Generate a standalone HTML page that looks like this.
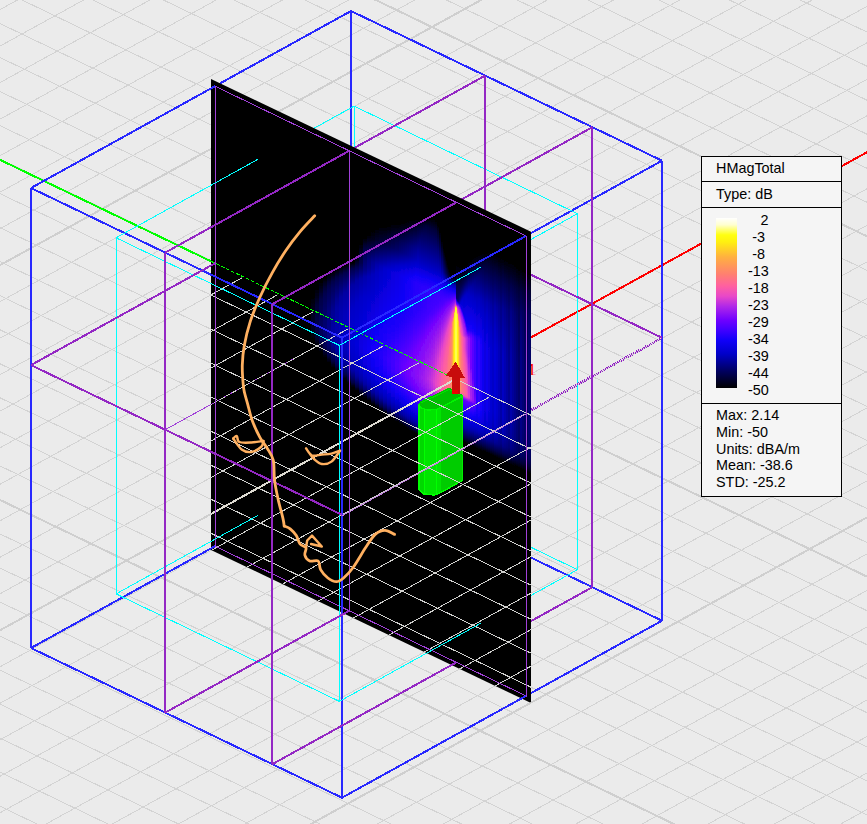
<!DOCTYPE html>
<html><head><meta charset="utf-8"><title>HMagTotal field plot</title>
<style>
html,body{margin:0;padding:0;background:#ebebeb;}
body{width:867px;height:824px;overflow:hidden;font-family:"Liberation Sans",sans-serif;}
svg{display:block}
.bl{stroke:#2828ff;stroke-width:2}
.cy{stroke:#00ffff;stroke-width:1}
.pu{stroke:#9428c4;stroke-width:2}
.put{stroke:#a040d8;stroke-width:1}
.put3{stroke:#a040d8;stroke-width:1;stroke-dasharray:2 5}
.put2{stroke:#c080e0;stroke-width:1;transform:translate(0,1px)}
.pud{stroke:#9420c8;stroke-width:2.6;stroke-dasharray:1 1}
.lg{font-family:"Liberation Sans",sans-serif;font-size:14.4px;fill:#000}
</style></head><body>
<svg width="867" height="824" viewBox="0 0 867 824">
<defs>
<clipPath id="cpOuter"><polygon points="211,79 531,231.8 531,703 211,550"/></clipPath>
<clipPath id="cpGrid"><polygon points="211,262.9 531,416.8 531,703 211,550"/></clipPath>
<clipPath id="cpOne"><rect x="531" y="355" width="20" height="20"/></clipPath>
<linearGradient id="cbar" x1="0" y1="0" x2="0" y2="1">
<stop offset="0" stop-color="#ffffff"/>
<stop offset="0.04" stop-color="#ffffd0"/>
<stop offset="0.10" stop-color="#ffff10"/>
<stop offset="0.14" stop-color="#fff010"/>
<stop offset="0.23" stop-color="#ffb040"/>
<stop offset="0.33" stop-color="#ff8070"/>
<stop offset="0.40" stop-color="#ff60a0"/>
<stop offset="0.46" stop-color="#e848c8"/>
<stop offset="0.52" stop-color="#b028e8"/>
<stop offset="0.60" stop-color="#7000ff"/>
<stop offset="0.66" stop-color="#4000ff"/>
<stop offset="0.72" stop-color="#1000f8"/>
<stop offset="0.80" stop-color="#0000c8"/>
<stop offset="0.90" stop-color="#000060"/>
<stop offset="1" stop-color="#000000"/>
</linearGradient>
</defs>
<rect width="867" height="824" fill="#ebebeb"/>
<g shape-rendering="crispEdges">

<path d="M0 -418.9 L867 -1.9 M0 -384.9 L867 32.1 M0 -350.9 L867 66.2 M0 -316.8 L867 100.2 M0 -282.8 L867 134.2 M0 -248.8 L867 168.3 M0 -214.7 L867 202.3 M0 -146.7 L867 270.4 M0 -112.6 L867 304.4 M0 -78.6 L867 338.4 M0 -44.6 L867 372.4 M0 -10.6 L867 406.5 M0 23.5 L867 440.5 M0 57.5 L867 474.5 M0 91.5 L867 508.6 M0 125.6 L867 542.6 M0 193.6 L867 610.7 M0 227.7 L867 644.7 M0 261.7 L867 678.7 M0 295.7 L867 712.7 M0 329.8 L867 746.8 M0 363.8 L867 780.8 M0 397.8 L867 814.8 M0 431.8 L867 848.9 M0 465.9 L867 882.9 M0 533.9 L867 951 M0 568 L867 985 M0 602 L867 1019 M0 636 L867 1053 M0 670.1 L867 1087.1 M0 704.1 L867 1121.1 M0 738.1 L867 1155.1 M0 772.1 L867 1189.2 M0 806.2 L867 1223.2 M0 9.6 L867 -468.3 M0 46.1 L867 -431.8 M0 82.6 L867 -395.3 M0 119.2 L867 -358.8 M0 155.7 L867 -322.3 M0 192.2 L867 -285.8 M0 228.7 L867 -249.3 M0 301.7 L867 -176.3 M0 338.2 L867 -139.8 M0 374.7 L867 -103.2 M0 411.2 L867 -66.7 M0 447.8 L867 -30.2 M0 484.3 L867 6.3 M0 520.8 L867 42.8 M0 557.3 L867 79.3 M0 593.8 L867 115.8 M0 666.8 L867 188.8 M0 703.3 L867 225.3 M0 739.8 L867 261.9 M0 776.3 L867 298.4 M0 812.8 L867 334.9 M0 849.4 L867 371.4 M0 885.9 L867 407.9 M0 922.4 L867 444.4 M0 958.9 L867 480.9 M0 1031.9 L867 553.9 M0 1068.4 L867 590.4 M0 1104.9 L867 627 M0 1141.4 L867 663.5 M0 1177.9 L867 700 M0 1214.5 L867 736.5 M0 1251 L867 773 M0 1287.5 L867 809.5" stroke="#d3d3d3" stroke-width="1" fill="none"/>
<path d="M0 -180.7 L867 236.3 M0 159.6 L867 576.6 M0 499.9 L867 916.9 M0 265.2 L867 -212.8 M0 630.3 L867 152.3 M0 995.4 L867 517.4" stroke="#cfcfcf" stroke-width="2" fill="none"/>
<line x1="0" y1="159.8" x2="211" y2="261.3" stroke="#00ff00" stroke-width="2"/>
<line x1="456.3" y1="378.6" x2="867" y2="152.2" stroke="#ff0000" stroke-width="2"/>
<g fill="none">
<line x1="351" y1="11" x2="215" y2="86.2" class="bl"/>
<line x1="662" y1="160.7" x2="526" y2="235.9" class="bl"/>
<line x1="351" y1="11" x2="662" y2="160.7" class="bl"/>
<line x1="351" y1="471" x2="215" y2="546.2" class="bl"/>
<line x1="662" y1="620.7" x2="526" y2="695.9" class="bl"/>
<line x1="351" y1="471" x2="662" y2="620.7" class="bl"/>
<line x1="351" y1="11" x2="351" y2="471" class="bl"/>
<line x1="662" y1="160.7" x2="662" y2="620.7" class="bl"/>
<line x1="354.1" y1="106.1" x2="258.1" y2="159.2" class="cy"/>
<line x1="577.5" y1="213.7" x2="481.5" y2="266.8" class="cy"/>
<line x1="354.1" y1="106.1" x2="577.5" y2="213.7" class="cy"/>
<line x1="354.1" y1="462.2" x2="258.1" y2="515.3" class="cy"/>
<line x1="577.5" y1="569.7" x2="481.5" y2="622.8" class="cy"/>
<line x1="354.1" y1="462.2" x2="577.5" y2="569.7" class="cy"/>
<line x1="354.1" y1="106.1" x2="354.1" y2="462.2" class="cy"/>
<line x1="577.5" y1="213.7" x2="577.5" y2="569.7" class="cy"/>
<line x1="485.2" y1="75.6" x2="349.2" y2="150.8" class="pu"/>
<line x1="485.2" y1="75.6" x2="485.2" y2="535.6" class="pu"/>
<line x1="485.2" y1="535.6" x2="349.2" y2="610.8" class="pu"/>
<line x1="592.3" y1="127.2" x2="456.3" y2="202.4" class="pu"/>
<line x1="592.3" y1="127.2" x2="592.3" y2="587.2" class="pu"/>
<line x1="592.3" y1="587.2" x2="456.3" y2="662.4" class="pu"/>
<line x1="351" y1="188.1" x2="215" y2="263.3" class="pu"/>
<line x1="351" y1="188.1" x2="662" y2="337.8" class="pu"/>
<line x1="662" y1="337.8" x2="526" y2="413" class="pud"/>
</g>
</g>
<text x="527.2" y="376.3" font-size="16.5" fill="#ff0000" font-family="Liberation Sans, sans-serif" clip-path="url(#cpOne)">1</text>
<polygon points="211,79 531,231.8 531,703 211,550" fill="#000"/>
<g clip-path="url(#cpOuter)">
<defs><linearGradient id="f0" x1="0" y1="0" x2="0" y2="1"><stop offset="0.000" stop-color="#000001"/><stop offset="1.000" stop-color="#000000"/></linearGradient><linearGradient id="f1" x1="0" y1="0" x2="0" y2="1"><stop offset="0.000" stop-color="#000000"/><stop offset="0.273" stop-color="#00001b"/><stop offset="0.591" stop-color="#000027"/><stop offset="0.773" stop-color="#00001f"/><stop offset="1.000" stop-color="#000000"/></linearGradient><linearGradient id="f2" x1="0" y1="0" x2="0" y2="1"><stop offset="0.000" stop-color="#000000"/><stop offset="0.310" stop-color="#000038"/><stop offset="0.621" stop-color="#00004a"/><stop offset="0.793" stop-color="#00003d"/><stop offset="0.897" stop-color="#000025"/><stop offset="1.000" stop-color="#000001"/></linearGradient><linearGradient id="f3" x1="0" y1="0" x2="0" y2="1"><stop offset="0.000" stop-color="#000000"/><stop offset="0.250" stop-color="#000048"/><stop offset="0.417" stop-color="#000057"/><stop offset="0.611" stop-color="#00005c"/><stop offset="0.722" stop-color="#000058"/><stop offset="0.833" stop-color="#000048"/><stop offset="0.972" stop-color="#000004"/><stop offset="1.000" stop-color="#000000"/></linearGradient><linearGradient id="f4" x1="0" y1="0" x2="0" y2="1"><stop offset="0.000" stop-color="#000000"/><stop offset="0.125" stop-color="#000036"/><stop offset="0.200" stop-color="#00004d"/><stop offset="0.425" stop-color="#000068"/><stop offset="0.625" stop-color="#000070"/><stop offset="0.750" stop-color="#000068"/><stop offset="0.875" stop-color="#00004f"/><stop offset="0.925" stop-color="#000036"/><stop offset="1.000" stop-color="#000000"/></linearGradient><linearGradient id="f5" x1="0" y1="0" x2="0" y2="1"><stop offset="0.000" stop-color="#000000"/><stop offset="0.133" stop-color="#000047"/><stop offset="0.178" stop-color="#000053"/><stop offset="0.422" stop-color="#00007c"/><stop offset="0.622" stop-color="#000089"/><stop offset="0.733" stop-color="#00007f"/><stop offset="0.889" stop-color="#000051"/><stop offset="0.911" stop-color="#000047"/><stop offset="0.978" stop-color="#00000d"/><stop offset="1.000" stop-color="#000000"/></linearGradient><linearGradient id="f6" x1="0" y1="0" x2="0" y2="1"><stop offset="0.000" stop-color="#000000"/><stop offset="0.104" stop-color="#000049"/><stop offset="0.167" stop-color="#00005b"/><stop offset="0.417" stop-color="#000093"/><stop offset="0.625" stop-color="#0000a3"/><stop offset="0.688" stop-color="#0000a0"/><stop offset="0.750" stop-color="#000094"/><stop offset="0.896" stop-color="#000059"/><stop offset="0.938" stop-color="#000042"/><stop offset="1.000" stop-color="#000000"/></linearGradient><linearGradient id="f7" x1="0" y1="0" x2="0" y2="1"><stop offset="0.000" stop-color="#000001"/><stop offset="0.077" stop-color="#000045"/><stop offset="0.096" stop-color="#00004f"/><stop offset="0.288" stop-color="#000090"/><stop offset="0.365" stop-color="#0000a2"/><stop offset="0.615" stop-color="#0000ae"/><stop offset="0.731" stop-color="#0000a7"/><stop offset="0.788" stop-color="#000096"/><stop offset="0.923" stop-color="#00004b"/><stop offset="0.981" stop-color="#000005"/><stop offset="1.000" stop-color="#000000"/></linearGradient><linearGradient id="f8" x1="0" y1="0" x2="0" y2="1"><stop offset="0.000" stop-color="#000000"/><stop offset="0.073" stop-color="#00004b"/><stop offset="0.273" stop-color="#00009f"/><stop offset="0.418" stop-color="#0000b1"/><stop offset="0.618" stop-color="#0000b9"/><stop offset="0.709" stop-color="#0000b4"/><stop offset="0.800" stop-color="#0000a4"/><stop offset="0.927" stop-color="#000050"/><stop offset="0.945" stop-color="#00003d"/><stop offset="0.982" stop-color="#000009"/><stop offset="1.000" stop-color="#000000"/></linearGradient><linearGradient id="f9" x1="0" y1="0" x2="0" y2="1"><stop offset="0.000" stop-color="#000000"/><stop offset="0.069" stop-color="#00004d"/><stop offset="0.241" stop-color="#0000a3"/><stop offset="0.431" stop-color="#0000bb"/><stop offset="0.621" stop-color="#0000c4"/><stop offset="0.724" stop-color="#0000bd"/><stop offset="0.828" stop-color="#0000a4"/><stop offset="0.931" stop-color="#000053"/><stop offset="0.948" stop-color="#000042"/><stop offset="0.983" stop-color="#00000a"/><stop offset="1.000" stop-color="#000000"/></linearGradient><linearGradient id="f10" x1="0" y1="0" x2="0" y2="1"><stop offset="0.000" stop-color="#000000"/><stop offset="0.016" stop-color="#00000c"/><stop offset="0.066" stop-color="#00004d"/><stop offset="0.197" stop-color="#00009f"/><stop offset="0.410" stop-color="#0000c3"/><stop offset="0.639" stop-color="#0200cd"/><stop offset="0.738" stop-color="#0000c5"/><stop offset="0.852" stop-color="#0000a2"/><stop offset="0.951" stop-color="#000044"/><stop offset="0.984" stop-color="#000009"/><stop offset="1.000" stop-color="#000000"/></linearGradient><linearGradient id="f11" x1="0" y1="0" x2="0" y2="1"><stop offset="0.000" stop-color="#000000"/><stop offset="0.016" stop-color="#000005"/><stop offset="0.062" stop-color="#00004c"/><stop offset="0.188" stop-color="#0000a4"/><stop offset="0.375" stop-color="#0000c7"/><stop offset="0.641" stop-color="#0400d4"/><stop offset="0.766" stop-color="#0000c8"/><stop offset="0.859" stop-color="#0000a6"/><stop offset="0.953" stop-color="#000044"/><stop offset="0.984" stop-color="#000005"/><stop offset="1.000" stop-color="#000000"/></linearGradient><linearGradient id="f12" x1="0" y1="0" x2="0" y2="1"><stop offset="0.000" stop-color="#000000"/><stop offset="0.058" stop-color="#000019"/><stop offset="0.101" stop-color="#00004d"/><stop offset="0.203" stop-color="#0000a3"/><stop offset="0.362" stop-color="#0000c8"/><stop offset="0.667" stop-color="#0600db"/><stop offset="0.812" stop-color="#0000c9"/><stop offset="0.884" stop-color="#0000a8"/><stop offset="0.899" stop-color="#00009e"/><stop offset="0.971" stop-color="#000041"/><stop offset="1.000" stop-color="#000000"/></linearGradient><linearGradient id="f13" x1="0" y1="0" x2="0" y2="1"><stop offset="0.000" stop-color="#000000"/><stop offset="0.013" stop-color="#000003"/><stop offset="0.092" stop-color="#00003a"/><stop offset="0.132" stop-color="#000049"/><stop offset="0.237" stop-color="#0000a7"/><stop offset="0.250" stop-color="#0000ab"/><stop offset="0.368" stop-color="#0000c9"/><stop offset="0.684" stop-color="#0900e3"/><stop offset="0.816" stop-color="#0300d0"/><stop offset="0.895" stop-color="#0000aa"/><stop offset="0.908" stop-color="#0000a0"/><stop offset="0.961" stop-color="#000053"/><stop offset="1.000" stop-color="#000000"/></linearGradient><linearGradient id="f14" x1="0" y1="0" x2="0" y2="1"><stop offset="0.000" stop-color="#000000"/><stop offset="0.012" stop-color="#000003"/><stop offset="0.049" stop-color="#00002c"/><stop offset="0.086" stop-color="#000049"/><stop offset="0.210" stop-color="#00008b"/><stop offset="0.247" stop-color="#0000ad"/><stop offset="0.370" stop-color="#0100cc"/><stop offset="0.691" stop-color="#0c00eb"/><stop offset="0.753" stop-color="#0a00e5"/><stop offset="0.827" stop-color="#0400d3"/><stop offset="0.864" stop-color="#0000c4"/><stop offset="0.901" stop-color="#0000ab"/><stop offset="0.914" stop-color="#0000a1"/><stop offset="0.963" stop-color="#000050"/><stop offset="0.988" stop-color="#00000f"/><stop offset="1.000" stop-color="#000000"/></linearGradient><linearGradient id="f15" x1="0" y1="0" x2="0" y2="1"><stop offset="0.000" stop-color="#000000"/><stop offset="0.107" stop-color="#00005c"/><stop offset="0.155" stop-color="#00007e"/><stop offset="0.202" stop-color="#000093"/><stop offset="0.250" stop-color="#0000b7"/><stop offset="0.393" stop-color="#0400d3"/><stop offset="0.690" stop-color="#0f00f4"/><stop offset="0.786" stop-color="#0a00e5"/><stop offset="0.857" stop-color="#0100cc"/><stop offset="0.893" stop-color="#0000b4"/><stop offset="0.917" stop-color="#00009f"/><stop offset="0.940" stop-color="#00006f"/><stop offset="0.964" stop-color="#00004b"/><stop offset="0.988" stop-color="#000003"/><stop offset="1.000" stop-color="#000000"/></linearGradient><linearGradient id="f16" x1="0" y1="0" x2="0" y2="1"><stop offset="0.000" stop-color="#000000"/><stop offset="0.046" stop-color="#000019"/><stop offset="0.184" stop-color="#000095"/><stop offset="0.218" stop-color="#0000a3"/><stop offset="0.253" stop-color="#0000bc"/><stop offset="0.575" stop-color="#0d00f0"/><stop offset="0.701" stop-color="#1400f9"/><stop offset="0.782" stop-color="#0e00f1"/><stop offset="0.862" stop-color="#0300d2"/><stop offset="0.897" stop-color="#0000bd"/><stop offset="0.931" stop-color="#00009b"/><stop offset="0.977" stop-color="#000040"/><stop offset="0.989" stop-color="#00001b"/><stop offset="1.000" stop-color="#000000"/></linearGradient><linearGradient id="f17" x1="0" y1="0" x2="0" y2="1"><stop offset="0.000" stop-color="#000000"/><stop offset="0.067" stop-color="#00002b"/><stop offset="0.200" stop-color="#0000a9"/><stop offset="0.244" stop-color="#0000c2"/><stop offset="0.578" stop-color="#1000f7"/><stop offset="0.700" stop-color="#1b00fa"/><stop offset="0.789" stop-color="#0f00f5"/><stop offset="0.889" stop-color="#0000c6"/><stop offset="0.922" stop-color="#0000a7"/><stop offset="0.933" stop-color="#000095"/><stop offset="0.967" stop-color="#000051"/><stop offset="0.989" stop-color="#00000a"/><stop offset="1.000" stop-color="#000000"/></linearGradient><linearGradient id="f18" x1="0" y1="0" x2="0" y2="1"><stop offset="0.000" stop-color="#000000"/><stop offset="0.087" stop-color="#000037"/><stop offset="0.217" stop-color="#0000b9"/><stop offset="0.250" stop-color="#0100ca"/><stop offset="0.543" stop-color="#1000f7"/><stop offset="0.707" stop-color="#2300fb"/><stop offset="0.804" stop-color="#1100f8"/><stop offset="0.902" stop-color="#0000c5"/><stop offset="0.935" stop-color="#0000a4"/><stop offset="0.978" stop-color="#000048"/><stop offset="1.000" stop-color="#000000"/></linearGradient><linearGradient id="f19" x1="0" y1="0" x2="0" y2="1"><stop offset="0.000" stop-color="#000000"/><stop offset="0.096" stop-color="#000044"/><stop offset="0.223" stop-color="#0000c9"/><stop offset="0.234" stop-color="#0200ce"/><stop offset="0.511" stop-color="#1000f8"/><stop offset="0.702" stop-color="#2e00fc"/><stop offset="0.745" stop-color="#2900fc"/><stop offset="0.819" stop-color="#1000f7"/><stop offset="0.904" stop-color="#0000c3"/><stop offset="0.936" stop-color="#00009e"/><stop offset="0.968" stop-color="#000054"/><stop offset="0.979" stop-color="#000035"/><stop offset="0.989" stop-color="#00000c"/><stop offset="1.000" stop-color="#000000"/></linearGradient><linearGradient id="f20" x1="0" y1="0" x2="0" y2="1"><stop offset="0.000" stop-color="#000001"/><stop offset="0.053" stop-color="#00002e"/><stop offset="0.105" stop-color="#000050"/><stop offset="0.200" stop-color="#0000b9"/><stop offset="0.232" stop-color="#0400d4"/><stop offset="0.484" stop-color="#1000f8"/><stop offset="0.705" stop-color="#3900fe"/><stop offset="0.758" stop-color="#3000fd"/><stop offset="0.832" stop-color="#1100f8"/><stop offset="0.905" stop-color="#0100ca"/><stop offset="0.937" stop-color="#0000a8"/><stop offset="0.947" stop-color="#000093"/><stop offset="0.979" stop-color="#000049"/><stop offset="0.989" stop-color="#00001f"/><stop offset="1.000" stop-color="#000000"/></linearGradient><linearGradient id="f21" x1="0" y1="0" x2="0" y2="1"><stop offset="0.000" stop-color="#000000"/><stop offset="0.071" stop-color="#00003b"/><stop offset="0.122" stop-color="#00005d"/><stop offset="0.204" stop-color="#0000bd"/><stop offset="0.245" stop-color="#0700dc"/><stop offset="0.459" stop-color="#1100f8"/><stop offset="0.551" stop-color="#1f00fa"/><stop offset="0.684" stop-color="#4100ff"/><stop offset="0.745" stop-color="#3e00ff"/><stop offset="0.837" stop-color="#1200f8"/><stop offset="0.908" stop-color="#0000c7"/><stop offset="0.939" stop-color="#0000a2"/><stop offset="0.969" stop-color="#000053"/><stop offset="0.990" stop-color="#000007"/><stop offset="1.000" stop-color="#000000"/></linearGradient><linearGradient id="f22" x1="0" y1="0" x2="0" y2="1"><stop offset="0.000" stop-color="#000000"/><stop offset="0.081" stop-color="#000048"/><stop offset="0.131" stop-color="#00006a"/><stop offset="0.212" stop-color="#0100cb"/><stop offset="0.253" stop-color="#0900e3"/><stop offset="0.424" stop-color="#1000f7"/><stop offset="0.525" stop-color="#2000fa"/><stop offset="0.646" stop-color="#4100ff"/><stop offset="0.707" stop-color="#4f00ff"/><stop offset="0.737" stop-color="#4c00ff"/><stop offset="0.778" stop-color="#3d00ff"/><stop offset="0.859" stop-color="#0e00f3"/><stop offset="0.909" stop-color="#0100cc"/><stop offset="0.939" stop-color="#0000a9"/><stop offset="0.980" stop-color="#000044"/><stop offset="0.990" stop-color="#000019"/><stop offset="1.000" stop-color="#000000"/></linearGradient><linearGradient id="f23" x1="0" y1="0" x2="0" y2="1"><stop offset="0.000" stop-color="#000000"/><stop offset="0.090" stop-color="#000053"/><stop offset="0.140" stop-color="#000076"/><stop offset="0.210" stop-color="#0100cb"/><stop offset="0.260" stop-color="#0b00e9"/><stop offset="0.410" stop-color="#1000f8"/><stop offset="0.500" stop-color="#1f00fa"/><stop offset="0.620" stop-color="#4100ff"/><stop offset="0.700" stop-color="#5700ff"/><stop offset="0.730" stop-color="#5600ff"/><stop offset="0.780" stop-color="#4500ff"/><stop offset="0.860" stop-color="#1000f8"/><stop offset="0.920" stop-color="#0000c7"/><stop offset="0.950" stop-color="#00009e"/><stop offset="0.980" stop-color="#00004e"/><stop offset="1.000" stop-color="#000000"/></linearGradient><linearGradient id="f24" x1="0" y1="0" x2="0" y2="1"><stop offset="0.000" stop-color="#000000"/><stop offset="0.099" stop-color="#00005a"/><stop offset="0.149" stop-color="#00007e"/><stop offset="0.208" stop-color="#0000c7"/><stop offset="0.238" stop-color="#0800df"/><stop offset="0.267" stop-color="#0c00ed"/><stop offset="0.396" stop-color="#1000f8"/><stop offset="0.495" stop-color="#2000fa"/><stop offset="0.604" stop-color="#4000ff"/><stop offset="0.703" stop-color="#5e00ff"/><stop offset="0.733" stop-color="#5d00ff"/><stop offset="0.792" stop-color="#4500ff"/><stop offset="0.871" stop-color="#0e00f3"/><stop offset="0.921" stop-color="#0100ca"/><stop offset="0.950" stop-color="#0000a3"/><stop offset="0.980" stop-color="#000052"/><stop offset="1.000" stop-color="#000001"/></linearGradient><linearGradient id="f25" x1="0" y1="0" x2="0" y2="1"><stop offset="0.000" stop-color="#000000"/><stop offset="0.010" stop-color="#000004"/><stop offset="0.107" stop-color="#000061"/><stop offset="0.155" stop-color="#000086"/><stop offset="0.214" stop-color="#0100cc"/><stop offset="0.272" stop-color="#0e00f1"/><stop offset="0.379" stop-color="#1000f8"/><stop offset="0.476" stop-color="#1f00fa"/><stop offset="0.592" stop-color="#4200ff"/><stop offset="0.699" stop-color="#6500ff"/><stop offset="0.728" stop-color="#6400ff"/><stop offset="0.786" stop-color="#4a00ff"/><stop offset="0.864" stop-color="#0f00f6"/><stop offset="0.913" stop-color="#0100cc"/><stop offset="0.942" stop-color="#0000a6"/><stop offset="0.971" stop-color="#000056"/><stop offset="0.981" stop-color="#000035"/><stop offset="0.990" stop-color="#000008"/><stop offset="1.000" stop-color="#000000"/></linearGradient><linearGradient id="f26" x1="0" y1="0" x2="0" y2="1"><stop offset="0.000" stop-color="#000001"/><stop offset="0.107" stop-color="#000069"/><stop offset="0.155" stop-color="#00008d"/><stop offset="0.204" stop-color="#0000c9"/><stop offset="0.233" stop-color="#0900e2"/><stop offset="0.272" stop-color="#0f00f5"/><stop offset="0.466" stop-color="#2100fa"/><stop offset="0.709" stop-color="#6e00ff"/><stop offset="0.748" stop-color="#6500ff"/><stop offset="0.806" stop-color="#4100ff"/><stop offset="0.864" stop-color="#1100f8"/><stop offset="0.922" stop-color="#0000c4"/><stop offset="0.942" stop-color="#0000a9"/><stop offset="0.951" stop-color="#000093"/><stop offset="0.981" stop-color="#00003d"/><stop offset="0.990" stop-color="#000010"/><stop offset="1.000" stop-color="#000000"/></linearGradient><linearGradient id="f27" x1="0" y1="0" x2="0" y2="1"><stop offset="0.000" stop-color="#000000"/><stop offset="0.115" stop-color="#000071"/><stop offset="0.163" stop-color="#000095"/><stop offset="0.202" stop-color="#0000c4"/><stop offset="0.260" stop-color="#0d00f0"/><stop offset="0.279" stop-color="#1100f8"/><stop offset="0.452" stop-color="#2100fa"/><stop offset="0.558" stop-color="#4100ff"/><stop offset="0.683" stop-color="#6e00ff"/><stop offset="0.731" stop-color="#7201fe"/><stop offset="0.779" stop-color="#5c00ff"/><stop offset="0.875" stop-color="#0e00f3"/><stop offset="0.923" stop-color="#0000c7"/><stop offset="0.942" stop-color="#0000ac"/><stop offset="0.952" stop-color="#000099"/><stop offset="0.981" stop-color="#000044"/><stop offset="0.990" stop-color="#000017"/><stop offset="1.000" stop-color="#000000"/></linearGradient><linearGradient id="f28" x1="0" y1="0" x2="0" y2="1"><stop offset="0.000" stop-color="#000000"/><stop offset="0.124" stop-color="#00007a"/><stop offset="0.171" stop-color="#00009d"/><stop offset="0.200" stop-color="#0000c0"/><stop offset="0.248" stop-color="#0b00ea"/><stop offset="0.267" stop-color="#0f00f4"/><stop offset="0.286" stop-color="#1600f9"/><stop offset="0.448" stop-color="#2200fb"/><stop offset="0.552" stop-color="#4300ff"/><stop offset="0.676" stop-color="#7302fe"/><stop offset="0.733" stop-color="#7805fc"/><stop offset="0.781" stop-color="#6200ff"/><stop offset="0.876" stop-color="#0f00f6"/><stop offset="0.924" stop-color="#0000c9"/><stop offset="0.952" stop-color="#00009f"/><stop offset="0.981" stop-color="#00004b"/><stop offset="0.990" stop-color="#00001e"/><stop offset="1.000" stop-color="#000000"/></linearGradient><linearGradient id="f29" x1="0" y1="0" x2="0" y2="1"><stop offset="0.000" stop-color="#000000"/><stop offset="0.009" stop-color="#000004"/><stop offset="0.132" stop-color="#000082"/><stop offset="0.179" stop-color="#0000a5"/><stop offset="0.208" stop-color="#0000c8"/><stop offset="0.274" stop-color="#1000f8"/><stop offset="0.292" stop-color="#1b00fa"/><stop offset="0.443" stop-color="#2400fb"/><stop offset="0.538" stop-color="#4200ff"/><stop offset="0.660" stop-color="#7402fe"/><stop offset="0.736" stop-color="#7d08fa"/><stop offset="0.783" stop-color="#6900ff"/><stop offset="0.877" stop-color="#1100f8"/><stop offset="0.925" stop-color="#0100cb"/><stop offset="0.953" stop-color="#0000a3"/><stop offset="0.981" stop-color="#00004e"/><stop offset="1.000" stop-color="#000000"/></linearGradient><linearGradient id="f30" x1="0" y1="0" x2="0" y2="1"><stop offset="0.000" stop-color="#000000"/><stop offset="0.038" stop-color="#00002d"/><stop offset="0.132" stop-color="#00008a"/><stop offset="0.179" stop-color="#0000ad"/><stop offset="0.198" stop-color="#0000c3"/><stop offset="0.264" stop-color="#1000f7"/><stop offset="0.292" stop-color="#2100fa"/><stop offset="0.453" stop-color="#2b00fc"/><stop offset="0.632" stop-color="#7201fe"/><stop offset="0.708" stop-color="#830cf8"/><stop offset="0.774" stop-color="#7604fd"/><stop offset="0.830" stop-color="#4300ff"/><stop offset="0.877" stop-color="#1300f8"/><stop offset="0.925" stop-color="#0200cd"/><stop offset="0.943" stop-color="#0000b4"/><stop offset="0.953" stop-color="#0000a6"/><stop offset="0.981" stop-color="#000052"/><stop offset="1.000" stop-color="#000000"/></linearGradient><linearGradient id="f31" x1="0" y1="0" x2="0" y2="1"><stop offset="0.000" stop-color="#000000"/><stop offset="0.130" stop-color="#000089"/><stop offset="0.185" stop-color="#0000b4"/><stop offset="0.204" stop-color="#0100ca"/><stop offset="0.259" stop-color="#1000f7"/><stop offset="0.296" stop-color="#2600fb"/><stop offset="0.426" stop-color="#2900fc"/><stop offset="0.509" stop-color="#4300ff"/><stop offset="0.611" stop-color="#7302fe"/><stop offset="0.694" stop-color="#870ef7"/><stop offset="0.731" stop-color="#870ef7"/><stop offset="0.787" stop-color="#6f00ff"/><stop offset="0.861" stop-color="#1d00fa"/><stop offset="0.880" stop-color="#0f00f5"/><stop offset="0.926" stop-color="#0000c4"/><stop offset="0.944" stop-color="#0000a8"/><stop offset="0.972" stop-color="#000055"/><stop offset="0.981" stop-color="#000031"/><stop offset="0.991" stop-color="#000002"/><stop offset="1.000" stop-color="#000000"/></linearGradient><linearGradient id="f32" x1="0" y1="0" x2="0" y2="1"><stop offset="0.000" stop-color="#000000"/><stop offset="0.009" stop-color="#000002"/><stop offset="0.046" stop-color="#000034"/><stop offset="0.147" stop-color="#00009a"/><stop offset="0.211" stop-color="#0100cc"/><stop offset="0.266" stop-color="#1000f8"/><stop offset="0.303" stop-color="#2700fb"/><stop offset="0.422" stop-color="#2b00fc"/><stop offset="0.495" stop-color="#4200ff"/><stop offset="0.596" stop-color="#7402fe"/><stop offset="0.725" stop-color="#8d12f4"/><stop offset="0.789" stop-color="#7503fd"/><stop offset="0.881" stop-color="#1000f7"/><stop offset="0.927" stop-color="#0000c7"/><stop offset="0.945" stop-color="#0000aa"/><stop offset="0.972" stop-color="#000058"/><stop offset="0.982" stop-color="#000037"/><stop offset="0.991" stop-color="#000008"/><stop offset="1.000" stop-color="#000000"/></linearGradient><linearGradient id="f33" x1="0" y1="0" x2="0" y2="1"><stop offset="0.000" stop-color="#000000"/><stop offset="0.037" stop-color="#000033"/><stop offset="0.101" stop-color="#000075"/><stop offset="0.202" stop-color="#0000c3"/><stop offset="0.266" stop-color="#1000f8"/><stop offset="0.303" stop-color="#2800fb"/><stop offset="0.413" stop-color="#2d00fc"/><stop offset="0.477" stop-color="#4000ff"/><stop offset="0.578" stop-color="#7403fd"/><stop offset="0.725" stop-color="#9316f2"/><stop offset="0.761" stop-color="#8910f6"/><stop offset="0.798" stop-color="#7201fe"/><stop offset="0.881" stop-color="#1100f8"/><stop offset="0.927" stop-color="#0000c9"/><stop offset="0.945" stop-color="#0000ac"/><stop offset="0.954" stop-color="#000098"/><stop offset="0.982" stop-color="#00003d"/><stop offset="0.991" stop-color="#00000d"/><stop offset="1.000" stop-color="#000000"/></linearGradient><linearGradient id="f34" x1="0" y1="0" x2="0" y2="1"><stop offset="0.000" stop-color="#000000"/><stop offset="0.009" stop-color="#000003"/><stop offset="0.027" stop-color="#000026"/><stop offset="0.073" stop-color="#000058"/><stop offset="0.209" stop-color="#0000c3"/><stop offset="0.273" stop-color="#1100f8"/><stop offset="0.309" stop-color="#2900fc"/><stop offset="0.409" stop-color="#2f00fd"/><stop offset="0.473" stop-color="#4300ff"/><stop offset="0.573" stop-color="#7805fc"/><stop offset="0.727" stop-color="#9a1bf0"/><stop offset="0.764" stop-color="#8e13f4"/><stop offset="0.800" stop-color="#7704fd"/><stop offset="0.882" stop-color="#1300f8"/><stop offset="0.927" stop-color="#0100ca"/><stop offset="0.955" stop-color="#00009c"/><stop offset="0.982" stop-color="#000042"/><stop offset="0.991" stop-color="#000013"/><stop offset="1.000" stop-color="#000000"/></linearGradient><linearGradient id="f35" x1="0" y1="0" x2="0" y2="1"><stop offset="0.000" stop-color="#000000"/><stop offset="0.027" stop-color="#00002f"/><stop offset="0.045" stop-color="#000044"/><stop offset="0.209" stop-color="#0000c3"/><stop offset="0.264" stop-color="#0f00f4"/><stop offset="0.309" stop-color="#2a00fc"/><stop offset="0.400" stop-color="#3200fd"/><stop offset="0.455" stop-color="#4100ff"/><stop offset="0.555" stop-color="#7805fc"/><stop offset="0.727" stop-color="#a21fed"/><stop offset="0.755" stop-color="#991af0"/><stop offset="0.809" stop-color="#7302fe"/><stop offset="0.882" stop-color="#1500f9"/><stop offset="0.927" stop-color="#0100cb"/><stop offset="0.955" stop-color="#0000a0"/><stop offset="0.982" stop-color="#000047"/><stop offset="0.991" stop-color="#000018"/><stop offset="1.000" stop-color="#000000"/></linearGradient><linearGradient id="f36" x1="0" y1="0" x2="0" y2="1"><stop offset="0.000" stop-color="#000000"/><stop offset="0.009" stop-color="#000004"/><stop offset="0.036" stop-color="#000039"/><stop offset="0.216" stop-color="#0000c3"/><stop offset="0.270" stop-color="#0f00f4"/><stop offset="0.315" stop-color="#2c00fc"/><stop offset="0.405" stop-color="#3500fd"/><stop offset="0.450" stop-color="#4400ff"/><stop offset="0.523" stop-color="#7100ff"/><stop offset="0.550" stop-color="#7c08fb"/><stop offset="0.676" stop-color="#a21fed"/><stop offset="0.730" stop-color="#aa24ea"/><stop offset="0.766" stop-color="#9b1bf0"/><stop offset="0.811" stop-color="#7805fc"/><stop offset="0.874" stop-color="#1f00fa"/><stop offset="0.892" stop-color="#0f00f5"/><stop offset="0.928" stop-color="#0200cd"/><stop offset="0.955" stop-color="#0000a3"/><stop offset="0.982" stop-color="#00004b"/><stop offset="0.991" stop-color="#00001c"/><stop offset="1.000" stop-color="#000000"/></linearGradient><linearGradient id="f37" x1="0" y1="0" x2="0" y2="1"><stop offset="0.000" stop-color="#000000"/><stop offset="0.036" stop-color="#000039"/><stop offset="0.216" stop-color="#0000c3"/><stop offset="0.270" stop-color="#0f00f5"/><stop offset="0.315" stop-color="#2d00fc"/><stop offset="0.432" stop-color="#4200ff"/><stop offset="0.505" stop-color="#7000ff"/><stop offset="0.532" stop-color="#7d08fa"/><stop offset="0.721" stop-color="#b42ae6"/><stop offset="0.766" stop-color="#a220ed"/><stop offset="0.811" stop-color="#7c07fb"/><stop offset="0.829" stop-color="#6400ff"/><stop offset="0.874" stop-color="#2200fb"/><stop offset="0.892" stop-color="#1000f7"/><stop offset="0.937" stop-color="#0000c3"/><stop offset="0.955" stop-color="#0000a5"/><stop offset="0.982" stop-color="#00004d"/><stop offset="0.991" stop-color="#000021"/><stop offset="1.000" stop-color="#000000"/></linearGradient><linearGradient id="f38" x1="0" y1="0" x2="0" y2="1"><stop offset="0.000" stop-color="#000000"/><stop offset="0.009" stop-color="#000004"/><stop offset="0.018" stop-color="#000019"/><stop offset="0.045" stop-color="#000039"/><stop offset="0.223" stop-color="#0000c3"/><stop offset="0.277" stop-color="#0f00f6"/><stop offset="0.321" stop-color="#2f00fd"/><stop offset="0.420" stop-color="#4100ff"/><stop offset="0.491" stop-color="#7000ff"/><stop offset="0.527" stop-color="#810bf9"/><stop offset="0.723" stop-color="#be30e0"/><stop offset="0.759" stop-color="#b128e8"/><stop offset="0.812" stop-color="#800af9"/><stop offset="0.830" stop-color="#6900ff"/><stop offset="0.875" stop-color="#2400fb"/><stop offset="0.893" stop-color="#1100f8"/><stop offset="0.938" stop-color="#0000c4"/><stop offset="0.955" stop-color="#0000a6"/><stop offset="0.982" stop-color="#00004f"/><stop offset="1.000" stop-color="#000000"/></linearGradient><linearGradient id="f39" x1="0" y1="0" x2="0" y2="1"><stop offset="0.000" stop-color="#000000"/><stop offset="0.045" stop-color="#000039"/><stop offset="0.223" stop-color="#0000c3"/><stop offset="0.277" stop-color="#1000f7"/><stop offset="0.321" stop-color="#3100fd"/><stop offset="0.402" stop-color="#4100ff"/><stop offset="0.429" stop-color="#4c00ff"/><stop offset="0.473" stop-color="#6f00ff"/><stop offset="0.509" stop-color="#820bf9"/><stop offset="0.723" stop-color="#cb37d9"/><stop offset="0.759" stop-color="#bb2ee2"/><stop offset="0.786" stop-color="#a11fed"/><stop offset="0.830" stop-color="#6e00ff"/><stop offset="0.875" stop-color="#2700fb"/><stop offset="0.893" stop-color="#1200f8"/><stop offset="0.938" stop-color="#0000c6"/><stop offset="0.955" stop-color="#0000a8"/><stop offset="0.982" stop-color="#000052"/><stop offset="1.000" stop-color="#000000"/></linearGradient><linearGradient id="f40" x1="0" y1="0" x2="0" y2="1"><stop offset="0.000" stop-color="#000000"/><stop offset="0.009" stop-color="#000003"/><stop offset="0.053" stop-color="#000039"/><stop offset="0.230" stop-color="#0000c3"/><stop offset="0.283" stop-color="#1000f7"/><stop offset="0.327" stop-color="#3300fd"/><stop offset="0.398" stop-color="#4300ff"/><stop offset="0.425" stop-color="#5000ff"/><stop offset="0.460" stop-color="#6e00ff"/><stop offset="0.496" stop-color="#830cf8"/><stop offset="0.726" stop-color="#db40d0"/><stop offset="0.752" stop-color="#cf3ad6"/><stop offset="0.779" stop-color="#b32ae6"/><stop offset="0.832" stop-color="#7201fe"/><stop offset="0.876" stop-color="#2900fc"/><stop offset="0.894" stop-color="#1300f8"/><stop offset="0.938" stop-color="#0000c8"/><stop offset="0.956" stop-color="#0000a9"/><stop offset="0.982" stop-color="#000053"/><stop offset="1.000" stop-color="#000000"/></linearGradient><linearGradient id="f41" x1="0" y1="0" x2="0" y2="1"><stop offset="0.000" stop-color="#000000"/><stop offset="0.045" stop-color="#000037"/><stop offset="0.223" stop-color="#0000c3"/><stop offset="0.277" stop-color="#1000f8"/><stop offset="0.321" stop-color="#3500fd"/><stop offset="0.375" stop-color="#4100ff"/><stop offset="0.411" stop-color="#5400ff"/><stop offset="0.438" stop-color="#6c00ff"/><stop offset="0.536" stop-color="#a11fed"/><stop offset="0.679" stop-color="#de42ce"/><stop offset="0.732" stop-color="#e848c7"/><stop offset="0.759" stop-color="#d53dd3"/><stop offset="0.786" stop-color="#b128e8"/><stop offset="0.830" stop-color="#7604fd"/><stop offset="0.893" stop-color="#1400f9"/><stop offset="0.938" stop-color="#0000c9"/><stop offset="0.955" stop-color="#0000aa"/><stop offset="0.982" stop-color="#000055"/><stop offset="1.000" stop-color="#000000"/></linearGradient><linearGradient id="f42" x1="0" y1="0" x2="0" y2="1"><stop offset="0.000" stop-color="#000000"/><stop offset="0.027" stop-color="#000025"/><stop offset="0.118" stop-color="#00007a"/><stop offset="0.209" stop-color="#0000c3"/><stop offset="0.264" stop-color="#1200f8"/><stop offset="0.309" stop-color="#3700fe"/><stop offset="0.355" stop-color="#4200ff"/><stop offset="0.382" stop-color="#5100ff"/><stop offset="0.418" stop-color="#7302fe"/><stop offset="0.618" stop-color="#da40d0"/><stop offset="0.655" stop-color="#e848c8"/><stop offset="0.727" stop-color="#ef50bb"/><stop offset="0.755" stop-color="#e546ca"/><stop offset="0.791" stop-color="#ab25ea"/><stop offset="0.836" stop-color="#6a00ff"/><stop offset="0.882" stop-color="#1f00fa"/><stop offset="0.900" stop-color="#0f00f4"/><stop offset="0.936" stop-color="#0000c9"/><stop offset="0.955" stop-color="#0000ac"/><stop offset="0.964" stop-color="#000094"/><stop offset="0.982" stop-color="#000057"/><stop offset="0.991" stop-color="#000032"/><stop offset="1.000" stop-color="#000001"/></linearGradient><linearGradient id="f43" x1="0" y1="0" x2="0" y2="1"><stop offset="0.000" stop-color="#000000"/><stop offset="0.009" stop-color="#000003"/><stop offset="0.138" stop-color="#00008f"/><stop offset="0.193" stop-color="#0000c2"/><stop offset="0.239" stop-color="#0e00f2"/><stop offset="0.284" stop-color="#3300fd"/><stop offset="0.321" stop-color="#4000ff"/><stop offset="0.358" stop-color="#5500ff"/><stop offset="0.385" stop-color="#7101ff"/><stop offset="0.587" stop-color="#e546ca"/><stop offset="0.716" stop-color="#f757af"/><stop offset="0.752" stop-color="#e848c7"/><stop offset="0.780" stop-color="#b32ae6"/><stop offset="0.826" stop-color="#6e00ff"/><stop offset="0.872" stop-color="#2100fa"/><stop offset="0.890" stop-color="#0f00f5"/><stop offset="0.927" stop-color="#0100ca"/><stop offset="0.945" stop-color="#0000ad"/><stop offset="0.954" stop-color="#000097"/><stop offset="0.972" stop-color="#000058"/><stop offset="0.982" stop-color="#000035"/><stop offset="0.991" stop-color="#000004"/><stop offset="1.000" stop-color="#000000"/></linearGradient><linearGradient id="f44" x1="0" y1="0" x2="0" y2="1"><stop offset="0.000" stop-color="#000000"/><stop offset="0.010" stop-color="#000003"/><stop offset="0.152" stop-color="#0000a3"/><stop offset="0.190" stop-color="#0700de"/><stop offset="0.210" stop-color="#0e00f1"/><stop offset="0.248" stop-color="#2f00fd"/><stop offset="0.286" stop-color="#4100ff"/><stop offset="0.314" stop-color="#5000ff"/><stop offset="0.343" stop-color="#6e00ff"/><stop offset="0.438" stop-color="#ae27e9"/><stop offset="0.533" stop-color="#e848c8"/><stop offset="0.629" stop-color="#f859ac"/><stop offset="0.705" stop-color="#fd5ea3"/><stop offset="0.733" stop-color="#f556b1"/><stop offset="0.752" stop-color="#e848c8"/><stop offset="0.781" stop-color="#a924ea"/><stop offset="0.819" stop-color="#7101ff"/><stop offset="0.867" stop-color="#2200fb"/><stop offset="0.886" stop-color="#0f00f6"/><stop offset="0.924" stop-color="#0100cb"/><stop offset="0.943" stop-color="#0000ad"/><stop offset="0.952" stop-color="#000099"/><stop offset="0.971" stop-color="#000059"/><stop offset="0.981" stop-color="#000038"/><stop offset="0.990" stop-color="#000006"/><stop offset="1.000" stop-color="#000000"/></linearGradient><linearGradient id="f45" x1="0" y1="0" x2="0" y2="1"><stop offset="0.000" stop-color="#000000"/><stop offset="0.010" stop-color="#000003"/><stop offset="0.127" stop-color="#00008b"/><stop offset="0.157" stop-color="#0000c8"/><stop offset="0.186" stop-color="#0d00ee"/><stop offset="0.196" stop-color="#1000f8"/><stop offset="0.216" stop-color="#2700fb"/><stop offset="0.255" stop-color="#4000ff"/><stop offset="0.284" stop-color="#5100ff"/><stop offset="0.314" stop-color="#7100ff"/><stop offset="0.402" stop-color="#af27e8"/><stop offset="0.490" stop-color="#e949c6"/><stop offset="0.588" stop-color="#fb5ba8"/><stop offset="0.676" stop-color="#ff639b"/><stop offset="0.706" stop-color="#ff619e"/><stop offset="0.725" stop-color="#fb5ca7"/><stop offset="0.745" stop-color="#ed4ebf"/><stop offset="0.755" stop-color="#dd42ce"/><stop offset="0.775" stop-color="#ae27e9"/><stop offset="0.794" stop-color="#8d12f5"/><stop offset="0.814" stop-color="#7302fe"/><stop offset="0.863" stop-color="#2300fb"/><stop offset="0.882" stop-color="#0f00f6"/><stop offset="0.922" stop-color="#0100cb"/><stop offset="0.951" stop-color="#00009a"/><stop offset="0.980" stop-color="#000039"/><stop offset="0.990" stop-color="#000008"/><stop offset="1.000" stop-color="#000000"/></linearGradient><linearGradient id="f46" x1="0" y1="0" x2="0" y2="1"><stop offset="0.000" stop-color="#000000"/><stop offset="0.010" stop-color="#000004"/><stop offset="0.110" stop-color="#000078"/><stop offset="0.150" stop-color="#0400d4"/><stop offset="0.170" stop-color="#0c00ec"/><stop offset="0.190" stop-color="#1b00fa"/><stop offset="0.240" stop-color="#4200ff"/><stop offset="0.270" stop-color="#5700ff"/><stop offset="0.290" stop-color="#6e00ff"/><stop offset="0.380" stop-color="#b329e7"/><stop offset="0.460" stop-color="#ea4ac5"/><stop offset="0.530" stop-color="#f859ac"/><stop offset="0.590" stop-color="#ff60a0"/><stop offset="0.680" stop-color="#ff6795"/><stop offset="0.710" stop-color="#ff639c"/><stop offset="0.730" stop-color="#f95aab"/><stop offset="0.750" stop-color="#e546ca"/><stop offset="0.770" stop-color="#b229e7"/><stop offset="0.790" stop-color="#8e13f4"/><stop offset="0.820" stop-color="#6200ff"/><stop offset="0.860" stop-color="#2400fb"/><stop offset="0.880" stop-color="#1000f7"/><stop offset="0.920" stop-color="#0100cb"/><stop offset="0.950" stop-color="#00009b"/><stop offset="0.980" stop-color="#00003a"/><stop offset="0.990" stop-color="#000009"/><stop offset="1.000" stop-color="#000000"/></linearGradient><linearGradient id="f47" x1="0" y1="0" x2="0" y2="1"><stop offset="0.000" stop-color="#000000"/><stop offset="0.010" stop-color="#000005"/><stop offset="0.092" stop-color="#000064"/><stop offset="0.112" stop-color="#000093"/><stop offset="0.133" stop-color="#0200cf"/><stop offset="0.153" stop-color="#0b00e9"/><stop offset="0.173" stop-color="#1a00f9"/><stop offset="0.224" stop-color="#4400ff"/><stop offset="0.265" stop-color="#6c00ff"/><stop offset="0.347" stop-color="#ae27e9"/><stop offset="0.418" stop-color="#e747c9"/><stop offset="0.500" stop-color="#fa5ba9"/><stop offset="0.582" stop-color="#ff649a"/><stop offset="0.673" stop-color="#ff6b90"/><stop offset="0.714" stop-color="#ff629d"/><stop offset="0.735" stop-color="#f555b2"/><stop offset="0.745" stop-color="#ea4ac5"/><stop offset="0.765" stop-color="#b52be5"/><stop offset="0.786" stop-color="#9014f4"/><stop offset="0.816" stop-color="#6300ff"/><stop offset="0.857" stop-color="#2400fb"/><stop offset="0.878" stop-color="#1000f7"/><stop offset="0.918" stop-color="#0100cc"/><stop offset="0.949" stop-color="#00009c"/><stop offset="0.980" stop-color="#00003b"/><stop offset="0.990" stop-color="#00000a"/><stop offset="1.000" stop-color="#000000"/></linearGradient><linearGradient id="f48" x1="0" y1="0" x2="0" y2="1"><stop offset="0.000" stop-color="#000000"/><stop offset="0.031" stop-color="#00001d"/><stop offset="0.073" stop-color="#000051"/><stop offset="0.094" stop-color="#000084"/><stop offset="0.115" stop-color="#0100cb"/><stop offset="0.135" stop-color="#0a00e6"/><stop offset="0.156" stop-color="#1900f9"/><stop offset="0.208" stop-color="#4600ff"/><stop offset="0.250" stop-color="#7604fd"/><stop offset="0.323" stop-color="#b229e7"/><stop offset="0.385" stop-color="#e748c8"/><stop offset="0.458" stop-color="#fa5ba9"/><stop offset="0.615" stop-color="#ff6c8e"/><stop offset="0.677" stop-color="#ff6e8b"/><stop offset="0.719" stop-color="#ff609f"/><stop offset="0.740" stop-color="#ed4dbf"/><stop offset="0.760" stop-color="#b82de3"/><stop offset="0.781" stop-color="#9114f3"/><stop offset="0.812" stop-color="#6400ff"/><stop offset="0.854" stop-color="#2500fb"/><stop offset="0.875" stop-color="#1000f7"/><stop offset="0.917" stop-color="#0100cc"/><stop offset="0.948" stop-color="#00009c"/><stop offset="0.979" stop-color="#00003c"/><stop offset="0.990" stop-color="#00000b"/><stop offset="1.000" stop-color="#000000"/></linearGradient><linearGradient id="f49" x1="0" y1="0" x2="0" y2="1"><stop offset="0.000" stop-color="#000000"/><stop offset="0.053" stop-color="#00003f"/><stop offset="0.064" stop-color="#000055"/><stop offset="0.074" stop-color="#000076"/><stop offset="0.096" stop-color="#0000c7"/><stop offset="0.106" stop-color="#0500d6"/><stop offset="0.138" stop-color="#1900f9"/><stop offset="0.181" stop-color="#4100ff"/><stop offset="0.223" stop-color="#7302fe"/><stop offset="0.287" stop-color="#ad26e9"/><stop offset="0.351" stop-color="#e848c8"/><stop offset="0.447" stop-color="#fe5fa1"/><stop offset="0.564" stop-color="#ff6f89"/><stop offset="0.670" stop-color="#ff7186"/><stop offset="0.713" stop-color="#ff649a"/><stop offset="0.734" stop-color="#f051ba"/><stop offset="0.745" stop-color="#db41cf"/><stop offset="0.755" stop-color="#bb2fe1"/><stop offset="0.777" stop-color="#9215f3"/><stop offset="0.809" stop-color="#6500ff"/><stop offset="0.851" stop-color="#2500fb"/><stop offset="0.872" stop-color="#1000f8"/><stop offset="0.915" stop-color="#0100cc"/><stop offset="0.947" stop-color="#00009d"/><stop offset="0.979" stop-color="#00003d"/><stop offset="0.989" stop-color="#00000b"/><stop offset="1.000" stop-color="#000000"/></linearGradient><linearGradient id="f50" x1="0" y1="0" x2="0" y2="1"><stop offset="0.000" stop-color="#000000"/><stop offset="0.011" stop-color="#000003"/><stop offset="0.043" stop-color="#00002e"/><stop offset="0.054" stop-color="#000046"/><stop offset="0.086" stop-color="#0000c2"/><stop offset="0.097" stop-color="#0400d4"/><stop offset="0.129" stop-color="#1900f9"/><stop offset="0.172" stop-color="#4300ff"/><stop offset="0.204" stop-color="#7000ff"/><stop offset="0.269" stop-color="#b028e8"/><stop offset="0.323" stop-color="#e848c8"/><stop offset="0.344" stop-color="#f050ba"/><stop offset="0.409" stop-color="#ff60a0"/><stop offset="0.473" stop-color="#ff6992"/><stop offset="0.484" stop-color="#ff7186"/><stop offset="0.516" stop-color="#ff7483"/><stop offset="0.667" stop-color="#ff7581"/><stop offset="0.699" stop-color="#ff6e8b"/><stop offset="0.720" stop-color="#ff60a1"/><stop offset="0.742" stop-color="#e144cc"/><stop offset="0.753" stop-color="#be30e0"/><stop offset="0.774" stop-color="#9316f2"/><stop offset="0.806" stop-color="#6600ff"/><stop offset="0.849" stop-color="#2600fb"/><stop offset="0.871" stop-color="#1000f8"/><stop offset="0.914" stop-color="#0100cc"/><stop offset="0.946" stop-color="#00009e"/><stop offset="0.978" stop-color="#00003d"/><stop offset="0.989" stop-color="#00000c"/><stop offset="1.000" stop-color="#000000"/></linearGradient><linearGradient id="f51" x1="0" y1="0" x2="0" y2="1"><stop offset="0.000" stop-color="#000000"/><stop offset="0.022" stop-color="#00001f"/><stop offset="0.033" stop-color="#000038"/><stop offset="0.066" stop-color="#0000be"/><stop offset="0.099" stop-color="#0e00f1"/><stop offset="0.110" stop-color="#1a00f9"/><stop offset="0.154" stop-color="#4800ff"/><stop offset="0.176" stop-color="#6a00ff"/><stop offset="0.242" stop-color="#b42ae6"/><stop offset="0.286" stop-color="#e848c8"/><stop offset="0.330" stop-color="#f859ac"/><stop offset="0.363" stop-color="#ff60a0"/><stop offset="0.407" stop-color="#ff6894"/><stop offset="0.418" stop-color="#ff767f"/><stop offset="0.527" stop-color="#ff787b"/><stop offset="0.670" stop-color="#ff777d"/><stop offset="0.692" stop-color="#ff7286"/><stop offset="0.714" stop-color="#ff639b"/><stop offset="0.736" stop-color="#e647c9"/><stop offset="0.747" stop-color="#c132de"/><stop offset="0.769" stop-color="#9517f2"/><stop offset="0.802" stop-color="#6600ff"/><stop offset="0.846" stop-color="#2600fb"/><stop offset="0.868" stop-color="#1000f8"/><stop offset="0.912" stop-color="#0100cc"/><stop offset="0.945" stop-color="#00009e"/><stop offset="0.978" stop-color="#00003e"/><stop offset="0.989" stop-color="#00000c"/><stop offset="1.000" stop-color="#000000"/></linearGradient><linearGradient id="f52" x1="0" y1="0" x2="0" y2="1"><stop offset="0.000" stop-color="#000000"/><stop offset="0.011" stop-color="#000002"/><stop offset="0.022" stop-color="#000012"/><stop offset="0.033" stop-color="#00002e"/><stop offset="0.066" stop-color="#0000bb"/><stop offset="0.077" stop-color="#0300d1"/><stop offset="0.099" stop-color="#0e00f2"/><stop offset="0.110" stop-color="#1a00f9"/><stop offset="0.154" stop-color="#4e00ff"/><stop offset="0.176" stop-color="#7705fc"/><stop offset="0.220" stop-color="#ab25ea"/><stop offset="0.264" stop-color="#e747c9"/><stop offset="0.308" stop-color="#fa5ba8"/><stop offset="0.352" stop-color="#ff6598"/><stop offset="0.363" stop-color="#ff7a7a"/><stop offset="0.385" stop-color="#ff7a78"/><stop offset="0.659" stop-color="#ff7c76"/><stop offset="0.692" stop-color="#ff7680"/><stop offset="0.714" stop-color="#ff6796"/><stop offset="0.725" stop-color="#fa5aa9"/><stop offset="0.736" stop-color="#e949c6"/><stop offset="0.747" stop-color="#c433dd"/><stop offset="0.769" stop-color="#9618f1"/><stop offset="0.802" stop-color="#6700ff"/><stop offset="0.846" stop-color="#2600fb"/><stop offset="0.868" stop-color="#1000f8"/><stop offset="0.912" stop-color="#0200cd"/><stop offset="0.945" stop-color="#00009e"/><stop offset="0.978" stop-color="#00003e"/><stop offset="0.989" stop-color="#00000d"/><stop offset="1.000" stop-color="#000000"/></linearGradient><linearGradient id="f53" x1="0" y1="0" x2="0" y2="1"><stop offset="0.000" stop-color="#000000"/><stop offset="0.011" stop-color="#000009"/><stop offset="0.022" stop-color="#000026"/><stop offset="0.056" stop-color="#0000b9"/><stop offset="0.067" stop-color="#0300d0"/><stop offset="0.089" stop-color="#0e00f3"/><stop offset="0.133" stop-color="#4600ff"/><stop offset="0.156" stop-color="#6f00ff"/><stop offset="0.200" stop-color="#af27e9"/><stop offset="0.233" stop-color="#e446ca"/><stop offset="0.278" stop-color="#fc5da5"/><stop offset="0.300" stop-color="#ff639b"/><stop offset="0.311" stop-color="#ff7e73"/><stop offset="0.433" stop-color="#ff8b65"/><stop offset="0.644" stop-color="#ff8e62"/><stop offset="0.667" stop-color="#ff866a"/><stop offset="0.711" stop-color="#ff6a90"/><stop offset="0.722" stop-color="#fc5da5"/><stop offset="0.733" stop-color="#eb4cc2"/><stop offset="0.744" stop-color="#c735db"/><stop offset="0.767" stop-color="#9718f1"/><stop offset="0.800" stop-color="#6800ff"/><stop offset="0.844" stop-color="#2700fb"/><stop offset="0.867" stop-color="#1000f8"/><stop offset="0.911" stop-color="#0200cd"/><stop offset="0.944" stop-color="#00009f"/><stop offset="0.978" stop-color="#00003f"/><stop offset="0.989" stop-color="#00000d"/><stop offset="1.000" stop-color="#000000"/></linearGradient><linearGradient id="f54" x1="0" y1="0" x2="0" y2="1"><stop offset="0.000" stop-color="#000000"/><stop offset="0.011" stop-color="#000004"/><stop offset="0.022" stop-color="#000022"/><stop offset="0.056" stop-color="#0000b8"/><stop offset="0.067" stop-color="#0300d0"/><stop offset="0.089" stop-color="#0f00f4"/><stop offset="0.133" stop-color="#4e00ff"/><stop offset="0.156" stop-color="#7d08fa"/><stop offset="0.189" stop-color="#b32ae6"/><stop offset="0.211" stop-color="#df43cd"/><stop offset="0.222" stop-color="#ed4dbf"/><stop offset="0.256" stop-color="#ff60a1"/><stop offset="0.267" stop-color="#ff915f"/><stop offset="0.300" stop-color="#ff9858"/><stop offset="0.444" stop-color="#ffa64a"/><stop offset="0.644" stop-color="#ffa947"/><stop offset="0.678" stop-color="#ff945c"/><stop offset="0.711" stop-color="#ff6e8b"/><stop offset="0.722" stop-color="#fe5fa1"/><stop offset="0.733" stop-color="#ed4dbf"/><stop offset="0.744" stop-color="#ca37d9"/><stop offset="0.767" stop-color="#9719f1"/><stop offset="0.800" stop-color="#6800ff"/><stop offset="0.844" stop-color="#2700fb"/><stop offset="0.867" stop-color="#1000f8"/><stop offset="0.911" stop-color="#0200cd"/><stop offset="0.944" stop-color="#00009f"/><stop offset="0.978" stop-color="#00003f"/><stop offset="0.989" stop-color="#00000e"/><stop offset="1.000" stop-color="#000000"/></linearGradient><linearGradient id="f55" x1="0" y1="0" x2="0" y2="1"><stop offset="0.000" stop-color="#000000"/><stop offset="0.011" stop-color="#000004"/><stop offset="0.022" stop-color="#000021"/><stop offset="0.056" stop-color="#0000b8"/><stop offset="0.067" stop-color="#0300d0"/><stop offset="0.089" stop-color="#0f00f6"/><stop offset="0.122" stop-color="#4400ff"/><stop offset="0.144" stop-color="#7705fc"/><stop offset="0.167" stop-color="#a01eee"/><stop offset="0.200" stop-color="#ec4cc1"/><stop offset="0.233" stop-color="#ff649b"/><stop offset="0.244" stop-color="#ffaf41"/><stop offset="0.311" stop-color="#ffca2c"/><stop offset="0.456" stop-color="#ffd822"/><stop offset="0.656" stop-color="#ffd722"/><stop offset="0.667" stop-color="#ffcf29"/><stop offset="0.678" stop-color="#ffbd36"/><stop offset="0.700" stop-color="#ff7e74"/><stop offset="0.722" stop-color="#ff619e"/><stop offset="0.733" stop-color="#ef4fbd"/><stop offset="0.744" stop-color="#cc38d8"/><stop offset="0.767" stop-color="#9819f1"/><stop offset="0.800" stop-color="#6800ff"/><stop offset="0.844" stop-color="#2700fb"/><stop offset="0.867" stop-color="#1100f8"/><stop offset="0.922" stop-color="#0000c0"/><stop offset="0.944" stop-color="#00009f"/><stop offset="0.978" stop-color="#000040"/><stop offset="0.989" stop-color="#00000e"/><stop offset="1.000" stop-color="#000000"/></linearGradient><linearGradient id="f56" x1="0" y1="0" x2="0" y2="1"><stop offset="0.000" stop-color="#000000"/><stop offset="0.011" stop-color="#000004"/><stop offset="0.022" stop-color="#000021"/><stop offset="0.056" stop-color="#0000b8"/><stop offset="0.067" stop-color="#0300d0"/><stop offset="0.089" stop-color="#1000f8"/><stop offset="0.122" stop-color="#4f00ff"/><stop offset="0.133" stop-color="#6d00ff"/><stop offset="0.156" stop-color="#9f1dee"/><stop offset="0.178" stop-color="#e747c9"/><stop offset="0.200" stop-color="#ff629d"/><stop offset="0.211" stop-color="#ffe01c"/><stop offset="0.222" stop-color="#ffe816"/><stop offset="0.244" stop-color="#fff110"/><stop offset="0.311" stop-color="#fff610"/><stop offset="0.633" stop-color="#fffa10"/><stop offset="0.678" stop-color="#fff310"/><stop offset="0.689" stop-color="#ffdf1d"/><stop offset="0.700" stop-color="#ff9c54"/><stop offset="0.711" stop-color="#ff7581"/><stop offset="0.722" stop-color="#ff639c"/><stop offset="0.733" stop-color="#f050bb"/><stop offset="0.744" stop-color="#ce39d7"/><stop offset="0.756" stop-color="#ae27e9"/><stop offset="0.789" stop-color="#7a06fb"/><stop offset="0.822" stop-color="#4600ff"/><stop offset="0.867" stop-color="#1100f8"/><stop offset="0.933" stop-color="#0000b1"/><stop offset="0.944" stop-color="#0000a0"/><stop offset="0.978" stop-color="#000040"/><stop offset="0.989" stop-color="#00000e"/><stop offset="1.000" stop-color="#000000"/></linearGradient><linearGradient id="f57" x1="0" y1="0" x2="0" y2="1"><stop offset="0.000" stop-color="#000000"/><stop offset="0.011" stop-color="#000004"/><stop offset="0.022" stop-color="#000021"/><stop offset="0.056" stop-color="#0000b8"/><stop offset="0.067" stop-color="#0300d0"/><stop offset="0.089" stop-color="#1100f8"/><stop offset="0.100" stop-color="#2500fb"/><stop offset="0.122" stop-color="#5d00ff"/><stop offset="0.133" stop-color="#7e09fa"/><stop offset="0.144" stop-color="#9a1af0"/><stop offset="0.156" stop-color="#c433dd"/><stop offset="0.167" stop-color="#f555b2"/><stop offset="0.178" stop-color="#fff910"/><stop offset="0.189" stop-color="#ffff20"/><stop offset="0.211" stop-color="#ffff36"/><stop offset="0.244" stop-color="#ffff42"/><stop offset="0.389" stop-color="#ffff4f"/><stop offset="0.644" stop-color="#ffff51"/><stop offset="0.678" stop-color="#ffff44"/><stop offset="0.689" stop-color="#ffff30"/><stop offset="0.700" stop-color="#ffea14"/><stop offset="0.711" stop-color="#ff777d"/><stop offset="0.722" stop-color="#ff649a"/><stop offset="0.733" stop-color="#f050ba"/><stop offset="0.744" stop-color="#ce39d7"/><stop offset="0.756" stop-color="#ae27e9"/><stop offset="0.789" stop-color="#7a06fb"/><stop offset="0.822" stop-color="#4600ff"/><stop offset="0.867" stop-color="#1100f8"/><stop offset="0.933" stop-color="#0000b1"/><stop offset="0.944" stop-color="#0000a0"/><stop offset="0.978" stop-color="#000040"/><stop offset="0.989" stop-color="#00000e"/><stop offset="1.000" stop-color="#000000"/></linearGradient><linearGradient id="f58" x1="0" y1="0" x2="0" y2="1"><stop offset="0.000" stop-color="#000000"/><stop offset="0.138" stop-color="#00004d"/><stop offset="0.195" stop-color="#000065"/><stop offset="0.207" stop-color="#0500d6"/><stop offset="0.218" stop-color="#3d00ff"/><stop offset="0.230" stop-color="#7805fc"/><stop offset="0.241" stop-color="#eb4bc3"/><stop offset="0.253" stop-color="#fff910"/><stop offset="0.287" stop-color="#ffff36"/><stop offset="0.345" stop-color="#ffff46"/><stop offset="0.690" stop-color="#ffff51"/><stop offset="0.701" stop-color="#fff510"/><stop offset="0.713" stop-color="#ffb040"/><stop offset="0.724" stop-color="#ff7f72"/><stop offset="0.736" stop-color="#f252b7"/><stop offset="0.747" stop-color="#a21fed"/><stop offset="0.759" stop-color="#6100ff"/><stop offset="0.782" stop-color="#4800ff"/><stop offset="0.839" stop-color="#0f00f4"/><stop offset="0.897" stop-color="#0000c7"/><stop offset="0.920" stop-color="#0000a7"/><stop offset="0.966" stop-color="#00004f"/><stop offset="1.000" stop-color="#000002"/></linearGradient><linearGradient id="f59" x1="0" y1="0" x2="0" y2="1"><stop offset="0.000" stop-color="#000000"/><stop offset="0.138" stop-color="#00004d"/><stop offset="0.195" stop-color="#000065"/><stop offset="0.207" stop-color="#000083"/><stop offset="0.218" stop-color="#0f00f5"/><stop offset="0.230" stop-color="#6000ff"/><stop offset="0.241" stop-color="#af27e9"/><stop offset="0.253" stop-color="#e647c9"/><stop offset="0.276" stop-color="#ff629e"/><stop offset="0.287" stop-color="#ffe01c"/><stop offset="0.310" stop-color="#ffee12"/><stop offset="0.414" stop-color="#fff710"/><stop offset="0.690" stop-color="#fffa10"/><stop offset="0.701" stop-color="#fff410"/><stop offset="0.713" stop-color="#ffb040"/><stop offset="0.724" stop-color="#ff7f72"/><stop offset="0.736" stop-color="#f252b7"/><stop offset="0.747" stop-color="#a21fed"/><stop offset="0.759" stop-color="#6100ff"/><stop offset="0.828" stop-color="#1700f9"/><stop offset="0.897" stop-color="#0000c7"/><stop offset="0.908" stop-color="#0000b8"/><stop offset="0.966" stop-color="#00004f"/><stop offset="1.000" stop-color="#000002"/></linearGradient><linearGradient id="f60" x1="0" y1="0" x2="0" y2="1"><stop offset="0.000" stop-color="#000000"/><stop offset="0.184" stop-color="#000067"/><stop offset="0.207" stop-color="#000083"/><stop offset="0.218" stop-color="#0400d5"/><stop offset="0.230" stop-color="#5c00ff"/><stop offset="0.241" stop-color="#9e1def"/><stop offset="0.276" stop-color="#ec4cc2"/><stop offset="0.310" stop-color="#ff649b"/><stop offset="0.322" stop-color="#ffaf41"/><stop offset="0.345" stop-color="#ffbb38"/><stop offset="0.414" stop-color="#ffd028"/><stop offset="0.701" stop-color="#ffdb20"/><stop offset="0.713" stop-color="#ffb040"/><stop offset="0.724" stop-color="#ff7f72"/><stop offset="0.736" stop-color="#f252b7"/><stop offset="0.747" stop-color="#a21fed"/><stop offset="0.759" stop-color="#6100ff"/><stop offset="0.828" stop-color="#1700f9"/><stop offset="0.897" stop-color="#0000c7"/><stop offset="0.908" stop-color="#0000b8"/><stop offset="0.966" stop-color="#00004f"/><stop offset="1.000" stop-color="#000002"/></linearGradient><linearGradient id="f61" x1="0" y1="0" x2="0" y2="1"><stop offset="0.000" stop-color="#000000"/><stop offset="0.092" stop-color="#000033"/><stop offset="0.161" stop-color="#000062"/><stop offset="0.195" stop-color="#00008e"/><stop offset="0.218" stop-color="#0000c8"/><stop offset="0.230" stop-color="#2e00fc"/><stop offset="0.241" stop-color="#7d08fa"/><stop offset="0.253" stop-color="#9c1cef"/><stop offset="0.299" stop-color="#eb4cc2"/><stop offset="0.322" stop-color="#f95aaa"/><stop offset="0.345" stop-color="#ff639c"/><stop offset="0.356" stop-color="#ff915f"/><stop offset="0.414" stop-color="#ff9b55"/><stop offset="0.701" stop-color="#ffa54b"/><stop offset="0.713" stop-color="#ffa34d"/><stop offset="0.724" stop-color="#ff7f72"/><stop offset="0.736" stop-color="#f252b7"/><stop offset="0.747" stop-color="#a21fed"/><stop offset="0.759" stop-color="#6100ff"/><stop offset="0.828" stop-color="#1700f9"/><stop offset="0.897" stop-color="#0000c7"/><stop offset="0.908" stop-color="#0000b8"/><stop offset="0.966" stop-color="#00004f"/><stop offset="1.000" stop-color="#000002"/></linearGradient><linearGradient id="f62" x1="0" y1="0" x2="0" y2="1"><stop offset="0.000" stop-color="#000000"/><stop offset="0.092" stop-color="#000036"/><stop offset="0.149" stop-color="#000067"/><stop offset="0.184" stop-color="#000097"/><stop offset="0.207" stop-color="#0100ca"/><stop offset="0.230" stop-color="#0a00e6"/><stop offset="0.241" stop-color="#4500ff"/><stop offset="0.253" stop-color="#880ff6"/><stop offset="0.310" stop-color="#e345cb"/><stop offset="0.345" stop-color="#f859ac"/><stop offset="0.379" stop-color="#ff639b"/><stop offset="0.391" stop-color="#ff7d74"/><stop offset="0.414" stop-color="#ff846c"/><stop offset="0.713" stop-color="#ff8e62"/><stop offset="0.724" stop-color="#ff7d75"/><stop offset="0.736" stop-color="#f252b7"/><stop offset="0.747" stop-color="#a21fed"/><stop offset="0.759" stop-color="#6100ff"/><stop offset="0.828" stop-color="#1700f9"/><stop offset="0.897" stop-color="#0000c7"/><stop offset="0.908" stop-color="#0000b8"/><stop offset="0.966" stop-color="#00004f"/><stop offset="1.000" stop-color="#000002"/></linearGradient><linearGradient id="f63" x1="0" y1="0" x2="0" y2="1"><stop offset="0.000" stop-color="#000000"/><stop offset="0.057" stop-color="#000023"/><stop offset="0.115" stop-color="#000051"/><stop offset="0.161" stop-color="#00008a"/><stop offset="0.195" stop-color="#0100ca"/><stop offset="0.207" stop-color="#0500d6"/><stop offset="0.230" stop-color="#0700dd"/><stop offset="0.241" stop-color="#0a00e5"/><stop offset="0.253" stop-color="#3c00fe"/><stop offset="0.264" stop-color="#7604fd"/><stop offset="0.276" stop-color="#9517f2"/><stop offset="0.345" stop-color="#e848c8"/><stop offset="0.391" stop-color="#fa5aa9"/><stop offset="0.402" stop-color="#ff6d8c"/><stop offset="0.448" stop-color="#ff6e8b"/><stop offset="0.460" stop-color="#ff787c"/><stop offset="0.494" stop-color="#ff797a"/><stop offset="0.713" stop-color="#ff7b78"/><stop offset="0.724" stop-color="#ff7581"/><stop offset="0.736" stop-color="#f152b8"/><stop offset="0.747" stop-color="#a21fed"/><stop offset="0.759" stop-color="#6100ff"/><stop offset="0.828" stop-color="#1700f9"/><stop offset="0.897" stop-color="#0000c7"/><stop offset="0.908" stop-color="#0000b8"/><stop offset="0.966" stop-color="#00004f"/><stop offset="1.000" stop-color="#000002"/></linearGradient><linearGradient id="f64" x1="0" y1="0" x2="0" y2="1"><stop offset="0.000" stop-color="#000000"/><stop offset="0.069" stop-color="#000032"/><stop offset="0.115" stop-color="#00005e"/><stop offset="0.149" stop-color="#00008e"/><stop offset="0.184" stop-color="#0100ca"/><stop offset="0.195" stop-color="#0400d3"/><stop offset="0.241" stop-color="#0800e0"/><stop offset="0.253" stop-color="#0b00e9"/><stop offset="0.264" stop-color="#3900fe"/><stop offset="0.276" stop-color="#6d00ff"/><stop offset="0.287" stop-color="#9115f3"/><stop offset="0.368" stop-color="#e345cb"/><stop offset="0.391" stop-color="#ef4fbc"/><stop offset="0.402" stop-color="#fd5ea4"/><stop offset="0.471" stop-color="#ff629e"/><stop offset="0.529" stop-color="#ff6992"/><stop offset="0.540" stop-color="#ff7383"/><stop offset="0.713" stop-color="#ff767e"/><stop offset="0.724" stop-color="#ff7285"/><stop offset="0.736" stop-color="#f152b8"/><stop offset="0.747" stop-color="#a220ed"/><stop offset="0.759" stop-color="#6100ff"/><stop offset="0.828" stop-color="#1700f9"/><stop offset="0.897" stop-color="#0000c7"/><stop offset="0.908" stop-color="#0000b8"/><stop offset="0.966" stop-color="#00004f"/><stop offset="1.000" stop-color="#000002"/></linearGradient><linearGradient id="f65" x1="0" y1="0" x2="0" y2="1"><stop offset="0.000" stop-color="#000000"/><stop offset="0.045" stop-color="#00001d"/><stop offset="0.102" stop-color="#000051"/><stop offset="0.136" stop-color="#00007e"/><stop offset="0.182" stop-color="#0000c8"/><stop offset="0.273" stop-color="#0a00e6"/><stop offset="0.284" stop-color="#2600fb"/><stop offset="0.295" stop-color="#5600ff"/><stop offset="0.307" stop-color="#800af9"/><stop offset="0.318" stop-color="#9416f2"/><stop offset="0.398" stop-color="#d83fd1"/><stop offset="0.409" stop-color="#f152b8"/><stop offset="0.455" stop-color="#f253b6"/><stop offset="0.534" stop-color="#ff619f"/><stop offset="0.659" stop-color="#ff6e8a"/><stop offset="0.727" stop-color="#ff6e8c"/><stop offset="0.739" stop-color="#f151b8"/><stop offset="0.750" stop-color="#a320ed"/><stop offset="0.761" stop-color="#6100ff"/><stop offset="0.830" stop-color="#1700f9"/><stop offset="0.898" stop-color="#0000c7"/><stop offset="0.909" stop-color="#0000b8"/><stop offset="0.966" stop-color="#00004f"/><stop offset="1.000" stop-color="#000002"/></linearGradient><linearGradient id="f66" x1="0" y1="0" x2="0" y2="1"><stop offset="0.000" stop-color="#000000"/><stop offset="0.057" stop-color="#00002e"/><stop offset="0.102" stop-color="#00005e"/><stop offset="0.170" stop-color="#0000c5"/><stop offset="0.284" stop-color="#0b00e9"/><stop offset="0.295" stop-color="#1b00fa"/><stop offset="0.307" stop-color="#4700ff"/><stop offset="0.318" stop-color="#6e00ff"/><stop offset="0.330" stop-color="#8f13f4"/><stop offset="0.386" stop-color="#b82ce4"/><stop offset="0.398" stop-color="#c836da"/><stop offset="0.409" stop-color="#e848c7"/><stop offset="0.455" stop-color="#e848c7"/><stop offset="0.523" stop-color="#f758ae"/><stop offset="0.591" stop-color="#ff609f"/><stop offset="0.727" stop-color="#ff6992"/><stop offset="0.739" stop-color="#f151b9"/><stop offset="0.750" stop-color="#a320ed"/><stop offset="0.761" stop-color="#6100ff"/><stop offset="0.830" stop-color="#1700f9"/><stop offset="0.898" stop-color="#0000c7"/><stop offset="0.909" stop-color="#0000b8"/><stop offset="0.966" stop-color="#00004f"/><stop offset="1.000" stop-color="#000002"/></linearGradient><linearGradient id="f67" x1="0" y1="0" x2="0" y2="1"><stop offset="0.000" stop-color="#000000"/><stop offset="0.034" stop-color="#000018"/><stop offset="0.090" stop-color="#00004f"/><stop offset="0.169" stop-color="#0000c2"/><stop offset="0.180" stop-color="#0100cb"/><stop offset="0.315" stop-color="#0e00f2"/><stop offset="0.326" stop-color="#2f00fd"/><stop offset="0.348" stop-color="#7503fd"/><stop offset="0.360" stop-color="#8f13f4"/><stop offset="0.393" stop-color="#a521ec"/><stop offset="0.416" stop-color="#d23cd4"/><stop offset="0.472" stop-color="#d63ed2"/><stop offset="0.528" stop-color="#ed4ebf"/><stop offset="0.674" stop-color="#ff619f"/><stop offset="0.730" stop-color="#ff639b"/><stop offset="0.742" stop-color="#f050bb"/><stop offset="0.753" stop-color="#a320ed"/><stop offset="0.764" stop-color="#6100ff"/><stop offset="0.843" stop-color="#0f00f4"/><stop offset="0.899" stop-color="#0000c7"/><stop offset="0.921" stop-color="#0000a7"/><stop offset="0.966" stop-color="#00004f"/><stop offset="1.000" stop-color="#000002"/></linearGradient><linearGradient id="f68" x1="0" y1="0" x2="0" y2="1"><stop offset="0.000" stop-color="#000002"/><stop offset="0.090" stop-color="#00005b"/><stop offset="0.157" stop-color="#0000be"/><stop offset="0.169" stop-color="#0000c8"/><stop offset="0.326" stop-color="#1000f7"/><stop offset="0.337" stop-color="#1600f9"/><stop offset="0.360" stop-color="#5200ff"/><stop offset="0.371" stop-color="#6f00ff"/><stop offset="0.382" stop-color="#8910f6"/><stop offset="0.393" stop-color="#9215f3"/><stop offset="0.404" stop-color="#af27e8"/><stop offset="0.416" stop-color="#bc2fe1"/><stop offset="0.472" stop-color="#bc2fe1"/><stop offset="0.562" stop-color="#e949c7"/><stop offset="0.652" stop-color="#f656b0"/><stop offset="0.730" stop-color="#fc5da6"/><stop offset="0.742" stop-color="#ee4ebd"/><stop offset="0.753" stop-color="#a220ed"/><stop offset="0.764" stop-color="#6100ff"/><stop offset="0.843" stop-color="#0f00f4"/><stop offset="0.899" stop-color="#0000c7"/><stop offset="0.921" stop-color="#0000a7"/><stop offset="0.966" stop-color="#00004f"/><stop offset="1.000" stop-color="#000002"/></linearGradient><linearGradient id="f69" x1="0" y1="0" x2="0" y2="1"><stop offset="0.000" stop-color="#000000"/><stop offset="0.078" stop-color="#00004c"/><stop offset="0.167" stop-color="#0000c3"/><stop offset="0.333" stop-color="#1000f7"/><stop offset="0.367" stop-color="#2300fb"/><stop offset="0.378" stop-color="#4100ff"/><stop offset="0.389" stop-color="#6600ff"/><stop offset="0.411" stop-color="#a21fed"/><stop offset="0.422" stop-color="#a924eb"/><stop offset="0.489" stop-color="#ab25ea"/><stop offset="0.633" stop-color="#e747c9"/><stop offset="0.733" stop-color="#f353b5"/><stop offset="0.744" stop-color="#eb4bc4"/><stop offset="0.756" stop-color="#a21fed"/><stop offset="0.767" stop-color="#6100ff"/><stop offset="0.844" stop-color="#0f00f4"/><stop offset="0.900" stop-color="#0000c7"/><stop offset="0.922" stop-color="#0000a7"/><stop offset="0.967" stop-color="#00004f"/><stop offset="1.000" stop-color="#000002"/></linearGradient><linearGradient id="f70" x1="0" y1="0" x2="0" y2="1"><stop offset="0.000" stop-color="#000000"/><stop offset="0.077" stop-color="#00004e"/><stop offset="0.154" stop-color="#0000b3"/><stop offset="0.176" stop-color="#0000c3"/><stop offset="0.341" stop-color="#1000f7"/><stop offset="0.374" stop-color="#2200fb"/><stop offset="0.396" stop-color="#6100ff"/><stop offset="0.418" stop-color="#8e13f4"/><stop offset="0.505" stop-color="#9316f2"/><stop offset="0.736" stop-color="#dd42ce"/><stop offset="0.747" stop-color="#d63ed2"/><stop offset="0.758" stop-color="#9f1dee"/><stop offset="0.769" stop-color="#6000ff"/><stop offset="0.846" stop-color="#0e00f3"/><stop offset="0.901" stop-color="#0000c7"/><stop offset="0.923" stop-color="#0000a7"/><stop offset="0.967" stop-color="#00004f"/><stop offset="1.000" stop-color="#000002"/></linearGradient><linearGradient id="f71" x1="0" y1="0" x2="0" y2="1"><stop offset="0.000" stop-color="#000001"/><stop offset="0.065" stop-color="#000047"/><stop offset="0.140" stop-color="#0000a5"/><stop offset="0.194" stop-color="#0000c8"/><stop offset="0.355" stop-color="#1300f8"/><stop offset="0.376" stop-color="#2000fa"/><stop offset="0.398" stop-color="#5700ff"/><stop offset="0.419" stop-color="#7302fe"/><stop offset="0.570" stop-color="#7503fd"/><stop offset="0.581" stop-color="#7805fc"/><stop offset="0.602" stop-color="#8e13f4"/><stop offset="0.731" stop-color="#ab25ea"/><stop offset="0.742" stop-color="#aa24ea"/><stop offset="0.753" stop-color="#9215f3"/><stop offset="0.763" stop-color="#5d00ff"/><stop offset="0.785" stop-color="#4600ff"/><stop offset="0.828" stop-color="#1400f9"/><stop offset="0.892" stop-color="#0000c6"/><stop offset="0.914" stop-color="#0000a7"/><stop offset="0.957" stop-color="#00004f"/><stop offset="0.989" stop-color="#000002"/><stop offset="1.000" stop-color="#000000"/></linearGradient><linearGradient id="f72" x1="0" y1="0" x2="0" y2="1"><stop offset="0.000" stop-color="#000000"/><stop offset="0.032" stop-color="#00001b"/><stop offset="0.137" stop-color="#000096"/><stop offset="0.200" stop-color="#0000c2"/><stop offset="0.368" stop-color="#1000f8"/><stop offset="0.389" stop-color="#1b00fa"/><stop offset="0.411" stop-color="#4800ff"/><stop offset="0.421" stop-color="#5300ff"/><stop offset="0.442" stop-color="#5900ff"/><stop offset="0.632" stop-color="#5900ff"/><stop offset="0.653" stop-color="#6b00ff"/><stop offset="0.695" stop-color="#8e13f4"/><stop offset="0.747" stop-color="#9618f1"/><stop offset="0.758" stop-color="#860ef7"/><stop offset="0.768" stop-color="#5a00ff"/><stop offset="0.832" stop-color="#1000f8"/><stop offset="0.884" stop-color="#0200cf"/><stop offset="0.905" stop-color="#0000b6"/><stop offset="0.958" stop-color="#00004f"/><stop offset="0.989" stop-color="#000002"/><stop offset="1.000" stop-color="#000000"/></linearGradient><linearGradient id="f73" x1="0" y1="0" x2="0" y2="1"><stop offset="0.000" stop-color="#000000"/><stop offset="0.125" stop-color="#000088"/><stop offset="0.229" stop-color="#0000c9"/><stop offset="0.385" stop-color="#1000f7"/><stop offset="0.396" stop-color="#1400f9"/><stop offset="0.417" stop-color="#3500fd"/><stop offset="0.438" stop-color="#3f00ff"/><stop offset="0.677" stop-color="#4100ff"/><stop offset="0.750" stop-color="#7805fc"/><stop offset="0.760" stop-color="#6f00ff"/><stop offset="0.771" stop-color="#4f00ff"/><stop offset="0.812" stop-color="#1c00fa"/><stop offset="0.833" stop-color="#0f00f4"/><stop offset="0.885" stop-color="#0200ce"/><stop offset="0.917" stop-color="#0000a5"/><stop offset="0.958" stop-color="#00004f"/><stop offset="0.990" stop-color="#000002"/><stop offset="1.000" stop-color="#000000"/></linearGradient><linearGradient id="f74" x1="0" y1="0" x2="0" y2="1"><stop offset="0.000" stop-color="#000000"/><stop offset="0.115" stop-color="#000078"/><stop offset="0.219" stop-color="#0000bd"/><stop offset="0.406" stop-color="#0e00f3"/><stop offset="0.427" stop-color="#2200fb"/><stop offset="0.458" stop-color="#2800fc"/><stop offset="0.760" stop-color="#2800fb"/><stop offset="0.833" stop-color="#0e00f3"/><stop offset="0.896" stop-color="#0100cc"/><stop offset="0.917" stop-color="#0000b3"/><stop offset="0.969" stop-color="#00004f"/><stop offset="1.000" stop-color="#000002"/></linearGradient><linearGradient id="f75" x1="0" y1="0" x2="0" y2="1"><stop offset="0.000" stop-color="#000000"/><stop offset="0.102" stop-color="#00006a"/><stop offset="0.224" stop-color="#0000bf"/><stop offset="0.408" stop-color="#1000f7"/><stop offset="0.429" stop-color="#2a00fc"/><stop offset="0.439" stop-color="#3000fd"/><stop offset="0.480" stop-color="#3200fd"/><stop offset="0.755" stop-color="#3200fd"/><stop offset="0.827" stop-color="#1000f7"/><stop offset="0.888" stop-color="#0200cd"/><stop offset="0.908" stop-color="#0000b4"/><stop offset="0.959" stop-color="#00004f"/><stop offset="0.990" stop-color="#000002"/><stop offset="1.000" stop-color="#000000"/></linearGradient><linearGradient id="f76" x1="0" y1="0" x2="0" y2="1"><stop offset="0.000" stop-color="#000000"/><stop offset="0.092" stop-color="#00005b"/><stop offset="0.235" stop-color="#0000bb"/><stop offset="0.418" stop-color="#0d00ee"/><stop offset="0.439" stop-color="#1600f9"/><stop offset="0.469" stop-color="#1b00fa"/><stop offset="0.776" stop-color="#1a00f9"/><stop offset="0.806" stop-color="#1000f8"/><stop offset="0.847" stop-color="#0b00e9"/><stop offset="0.898" stop-color="#0100ca"/><stop offset="0.929" stop-color="#0000a1"/><stop offset="0.969" stop-color="#00004e"/><stop offset="1.000" stop-color="#000002"/></linearGradient><linearGradient id="f77" x1="0" y1="0" x2="0" y2="1"><stop offset="0.000" stop-color="#000000"/><stop offset="0.081" stop-color="#00004d"/><stop offset="0.242" stop-color="#0000b5"/><stop offset="0.293" stop-color="#0000c8"/><stop offset="0.475" stop-color="#0d00f0"/><stop offset="0.778" stop-color="#0d00f0"/><stop offset="0.859" stop-color="#0700dc"/><stop offset="0.899" stop-color="#0000c4"/><stop offset="0.929" stop-color="#00009e"/><stop offset="0.970" stop-color="#00004d"/><stop offset="1.000" stop-color="#000002"/></linearGradient><linearGradient id="f78" x1="0" y1="0" x2="0" y2="1"><stop offset="0.000" stop-color="#000000"/><stop offset="0.010" stop-color="#000003"/><stop offset="0.070" stop-color="#00003e"/><stop offset="0.250" stop-color="#0000ae"/><stop offset="0.330" stop-color="#0000c8"/><stop offset="0.480" stop-color="#0800e1"/><stop offset="0.780" stop-color="#0800e1"/><stop offset="0.880" stop-color="#0100cb"/><stop offset="0.930" stop-color="#000099"/><stop offset="0.970" stop-color="#00004c"/><stop offset="1.000" stop-color="#000001"/></linearGradient><linearGradient id="f79" x1="0" y1="0" x2="0" y2="1"><stop offset="0.000" stop-color="#000000"/><stop offset="0.050" stop-color="#000032"/><stop offset="0.250" stop-color="#0000b3"/><stop offset="0.310" stop-color="#0000c9"/><stop offset="0.480" stop-color="#0c00ec"/><stop offset="0.780" stop-color="#0c00ec"/><stop offset="0.870" stop-color="#0400d5"/><stop offset="0.900" stop-color="#0000c2"/><stop offset="0.930" stop-color="#00009d"/><stop offset="0.970" stop-color="#00004d"/><stop offset="1.000" stop-color="#000002"/></linearGradient><linearGradient id="f80" x1="0" y1="0" x2="0" y2="1"><stop offset="0.000" stop-color="#000000"/><stop offset="0.059" stop-color="#000031"/><stop offset="0.257" stop-color="#0000ac"/><stop offset="0.347" stop-color="#0000c7"/><stop offset="0.485" stop-color="#0700de"/><stop offset="0.782" stop-color="#0700de"/><stop offset="0.881" stop-color="#0000c9"/><stop offset="0.931" stop-color="#000097"/><stop offset="0.970" stop-color="#00004b"/><stop offset="1.000" stop-color="#000001"/></linearGradient><linearGradient id="f81" x1="0" y1="0" x2="0" y2="1"><stop offset="0.000" stop-color="#000000"/><stop offset="0.040" stop-color="#000023"/><stop offset="0.099" stop-color="#000049"/><stop offset="0.257" stop-color="#0000a4"/><stop offset="0.396" stop-color="#0000c8"/><stop offset="0.485" stop-color="#0400d3"/><stop offset="0.782" stop-color="#0400d3"/><stop offset="0.861" stop-color="#0000c9"/><stop offset="0.901" stop-color="#0000b0"/><stop offset="0.931" stop-color="#000092"/><stop offset="0.970" stop-color="#00004a"/><stop offset="1.000" stop-color="#000001"/></linearGradient><linearGradient id="f82" x1="0" y1="0" x2="0" y2="1"><stop offset="0.000" stop-color="#000000"/><stop offset="0.040" stop-color="#000021"/><stop offset="0.109" stop-color="#00004d"/><stop offset="0.257" stop-color="#00009b"/><stop offset="0.455" stop-color="#0000c7"/><stop offset="0.505" stop-color="#0000c8"/><stop offset="0.782" stop-color="#0000c8"/><stop offset="0.871" stop-color="#0000b6"/><stop offset="0.931" stop-color="#00008b"/><stop offset="0.970" stop-color="#000047"/><stop offset="1.000" stop-color="#000000"/></linearGradient><linearGradient id="f83" x1="0" y1="0" x2="0" y2="1"><stop offset="0.000" stop-color="#000000"/><stop offset="0.089" stop-color="#000044"/><stop offset="0.257" stop-color="#0000a7"/><stop offset="0.376" stop-color="#0000c7"/><stop offset="0.485" stop-color="#0500d6"/><stop offset="0.782" stop-color="#0500d6"/><stop offset="0.871" stop-color="#0000c8"/><stop offset="0.931" stop-color="#000094"/><stop offset="0.970" stop-color="#00004a"/><stop offset="1.000" stop-color="#000001"/></linearGradient><linearGradient id="f84" x1="0" y1="0" x2="0" y2="1"><stop offset="0.000" stop-color="#000000"/><stop offset="0.040" stop-color="#000022"/><stop offset="0.109" stop-color="#00004e"/><stop offset="0.257" stop-color="#00009e"/><stop offset="0.446" stop-color="#0000c9"/><stop offset="0.485" stop-color="#0100cb"/><stop offset="0.782" stop-color="#0100cb"/><stop offset="0.861" stop-color="#0000bf"/><stop offset="0.901" stop-color="#0000a9"/><stop offset="0.931" stop-color="#00008d"/><stop offset="0.970" stop-color="#000048"/><stop offset="1.000" stop-color="#000000"/></linearGradient><linearGradient id="f85" x1="0" y1="0" x2="0" y2="1"><stop offset="0.000" stop-color="#000000"/><stop offset="0.109" stop-color="#00004b"/><stop offset="0.248" stop-color="#000091"/><stop offset="0.455" stop-color="#0000ba"/><stop offset="0.505" stop-color="#0000bb"/><stop offset="0.782" stop-color="#0000bb"/><stop offset="0.871" stop-color="#0000ac"/><stop offset="0.931" stop-color="#000085"/><stop offset="0.970" stop-color="#000046"/><stop offset="1.000" stop-color="#000000"/></linearGradient><linearGradient id="f86" x1="0" y1="0" x2="0" y2="1"><stop offset="0.000" stop-color="#000000"/><stop offset="0.119" stop-color="#00004c"/><stop offset="0.248" stop-color="#000086"/><stop offset="0.455" stop-color="#0000a7"/><stop offset="0.505" stop-color="#0000a8"/><stop offset="0.782" stop-color="#0000a8"/><stop offset="0.881" stop-color="#000099"/><stop offset="0.921" stop-color="#000084"/><stop offset="0.941" stop-color="#00006f"/><stop offset="0.970" stop-color="#000042"/><stop offset="1.000" stop-color="#000000"/></linearGradient><linearGradient id="f87" x1="0" y1="0" x2="0" y2="1"><stop offset="0.000" stop-color="#000000"/><stop offset="0.040" stop-color="#000021"/><stop offset="0.109" stop-color="#00004c"/><stop offset="0.248" stop-color="#000095"/><stop offset="0.485" stop-color="#0000c3"/><stop offset="0.782" stop-color="#0000c3"/><stop offset="0.871" stop-color="#0000b2"/><stop offset="0.931" stop-color="#000089"/><stop offset="0.970" stop-color="#000047"/><stop offset="1.000" stop-color="#000000"/></linearGradient><linearGradient id="f88" x1="0" y1="0" x2="0" y2="1"><stop offset="0.000" stop-color="#000000"/><stop offset="0.119" stop-color="#00004f"/><stop offset="0.248" stop-color="#00008c"/><stop offset="0.455" stop-color="#0000b1"/><stop offset="0.505" stop-color="#0000b2"/><stop offset="0.782" stop-color="#0000b2"/><stop offset="0.871" stop-color="#0000a5"/><stop offset="0.931" stop-color="#000081"/><stop offset="0.970" stop-color="#000044"/><stop offset="1.000" stop-color="#000000"/></linearGradient><linearGradient id="f89" x1="0" y1="0" x2="0" y2="1"><stop offset="0.000" stop-color="#000000"/><stop offset="0.119" stop-color="#00004b"/><stop offset="0.238" stop-color="#00007e"/><stop offset="0.347" stop-color="#000093"/><stop offset="0.505" stop-color="#0000a1"/><stop offset="0.782" stop-color="#0000a1"/><stop offset="0.881" stop-color="#000094"/><stop offset="0.921" stop-color="#000080"/><stop offset="0.941" stop-color="#00006d"/><stop offset="0.970" stop-color="#000041"/><stop offset="1.000" stop-color="#000000"/></linearGradient><linearGradient id="f90" x1="0" y1="0" x2="0" y2="1"><stop offset="0.000" stop-color="#000000"/><stop offset="0.119" stop-color="#000046"/><stop offset="0.238" stop-color="#000074"/><stop offset="0.347" stop-color="#000085"/><stop offset="0.505" stop-color="#000090"/><stop offset="0.782" stop-color="#000090"/><stop offset="0.881" stop-color="#000086"/><stop offset="0.921" stop-color="#000075"/><stop offset="0.941" stop-color="#000064"/><stop offset="0.970" stop-color="#00003d"/><stop offset="1.000" stop-color="#000000"/></linearGradient><linearGradient id="f91" x1="0" y1="0" x2="0" y2="1"><stop offset="0.000" stop-color="#000000"/><stop offset="0.119" stop-color="#00004d"/><stop offset="0.248" stop-color="#000088"/><stop offset="0.455" stop-color="#0000aa"/><stop offset="0.505" stop-color="#0000ab"/><stop offset="0.782" stop-color="#0000ab"/><stop offset="0.881" stop-color="#00009c"/><stop offset="0.921" stop-color="#000086"/><stop offset="0.941" stop-color="#000071"/><stop offset="0.970" stop-color="#000043"/><stop offset="1.000" stop-color="#000000"/></linearGradient><linearGradient id="f92" x1="0" y1="0" x2="0" y2="1"><stop offset="0.000" stop-color="#000000"/><stop offset="0.119" stop-color="#000049"/><stop offset="0.238" stop-color="#00007a"/><stop offset="0.347" stop-color="#00008d"/><stop offset="0.505" stop-color="#00009a"/><stop offset="0.782" stop-color="#00009a"/><stop offset="0.881" stop-color="#00008e"/><stop offset="0.921" stop-color="#00007c"/><stop offset="0.941" stop-color="#000069"/><stop offset="0.970" stop-color="#00003f"/><stop offset="1.000" stop-color="#000000"/></linearGradient><linearGradient id="f93" x1="0" y1="0" x2="0" y2="1"><stop offset="0.000" stop-color="#000002"/><stop offset="0.030" stop-color="#000019"/><stop offset="0.120" stop-color="#000048"/><stop offset="0.250" stop-color="#000074"/><stop offset="0.450" stop-color="#00008a"/><stop offset="0.770" stop-color="#00008a"/><stop offset="0.860" stop-color="#000084"/><stop offset="0.920" stop-color="#000071"/><stop offset="0.960" stop-color="#000049"/><stop offset="1.000" stop-color="#000000"/></linearGradient><linearGradient id="f94" x1="0" y1="0" x2="0" y2="1"><stop offset="0.000" stop-color="#000000"/><stop offset="0.100" stop-color="#00003a"/><stop offset="0.220" stop-color="#000062"/><stop offset="0.310" stop-color="#00006f"/><stop offset="0.500" stop-color="#00007a"/><stop offset="0.780" stop-color="#00007a"/><stop offset="0.890" stop-color="#000070"/><stop offset="0.930" stop-color="#000060"/><stop offset="0.950" stop-color="#00004f"/><stop offset="0.970" stop-color="#000036"/><stop offset="1.000" stop-color="#000000"/></linearGradient><linearGradient id="f95" x1="0" y1="0" x2="0" y2="1"><stop offset="0.000" stop-color="#000000"/><stop offset="0.110" stop-color="#000038"/><stop offset="0.210" stop-color="#000055"/><stop offset="0.500" stop-color="#00006b"/><stop offset="0.780" stop-color="#00006b"/><stop offset="0.890" stop-color="#000062"/><stop offset="0.930" stop-color="#000056"/><stop offset="0.950" stop-color="#000046"/><stop offset="0.970" stop-color="#000030"/><stop offset="1.000" stop-color="#000000"/></linearGradient><linearGradient id="f96" x1="0" y1="0" x2="0" y2="1"><stop offset="0.000" stop-color="#000001"/><stop offset="0.030" stop-color="#000019"/><stop offset="0.120" stop-color="#000047"/><stop offset="0.250" stop-color="#000072"/><stop offset="0.450" stop-color="#000086"/><stop offset="0.770" stop-color="#000087"/><stop offset="0.860" stop-color="#000081"/><stop offset="0.920" stop-color="#00006f"/><stop offset="0.960" stop-color="#000048"/><stop offset="1.000" stop-color="#000000"/></linearGradient><linearGradient id="f97" x1="0" y1="0" x2="0" y2="1"><stop offset="0.000" stop-color="#000000"/><stop offset="0.100" stop-color="#000038"/><stop offset="0.210" stop-color="#00005e"/><stop offset="0.310" stop-color="#00006c"/><stop offset="0.500" stop-color="#000077"/><stop offset="0.780" stop-color="#000077"/><stop offset="0.890" stop-color="#00006d"/><stop offset="0.930" stop-color="#00005e"/><stop offset="0.950" stop-color="#00004d"/><stop offset="0.970" stop-color="#000035"/><stop offset="1.000" stop-color="#000000"/></linearGradient><linearGradient id="f98" x1="0" y1="0" x2="0" y2="1"><stop offset="0.000" stop-color="#000000"/><stop offset="0.110" stop-color="#000036"/><stop offset="0.210" stop-color="#000053"/><stop offset="0.500" stop-color="#000067"/><stop offset="0.810" stop-color="#000067"/><stop offset="0.900" stop-color="#00005d"/><stop offset="0.930" stop-color="#000054"/><stop offset="0.950" stop-color="#000045"/><stop offset="0.970" stop-color="#00002f"/><stop offset="1.000" stop-color="#000000"/></linearGradient><linearGradient id="f99" x1="0" y1="0" x2="0" y2="1"><stop offset="0.000" stop-color="#000000"/><stop offset="0.091" stop-color="#00002b"/><stop offset="0.192" stop-color="#000047"/><stop offset="0.495" stop-color="#000059"/><stop offset="0.808" stop-color="#000058"/><stop offset="0.899" stop-color="#000051"/><stop offset="0.949" stop-color="#00003c"/><stop offset="1.000" stop-color="#000000"/></linearGradient><linearGradient id="f100" x1="0" y1="0" x2="0" y2="1"><stop offset="0.000" stop-color="#000000"/><stop offset="0.100" stop-color="#000038"/><stop offset="0.210" stop-color="#00005c"/><stop offset="0.310" stop-color="#00006b"/><stop offset="0.500" stop-color="#000075"/><stop offset="0.780" stop-color="#000075"/><stop offset="0.890" stop-color="#00006c"/><stop offset="0.930" stop-color="#00005d"/><stop offset="0.950" stop-color="#00004c"/><stop offset="0.970" stop-color="#000035"/><stop offset="1.000" stop-color="#000000"/></linearGradient><linearGradient id="f101" x1="0" y1="0" x2="0" y2="1"><stop offset="0.000" stop-color="#000000"/><stop offset="0.110" stop-color="#000037"/><stop offset="0.210" stop-color="#000055"/><stop offset="0.500" stop-color="#00006a"/><stop offset="0.780" stop-color="#00006a"/><stop offset="0.890" stop-color="#000062"/><stop offset="0.930" stop-color="#000056"/><stop offset="0.950" stop-color="#000047"/><stop offset="0.970" stop-color="#000030"/><stop offset="1.000" stop-color="#000000"/></linearGradient><filter id="fblur" x="-5%" y="-5%" width="110%" height="110%"><feGaussianBlur stdDeviation="0.6 0"/></filter></defs>
<g filter="url(#fblur)"><rect x="307" y="313.8" width="4.05" height="12.0" fill="url(#f0)"/>
<rect x="311" y="295.7" width="4.05" height="44.0" fill="url(#f1)"/>
<rect x="315" y="287.6" width="4.05" height="58.0" fill="url(#f2)"/>
<rect x="319" y="281.5" width="4.05" height="72.0" fill="url(#f3)"/>
<rect x="323" y="277.4" width="4.05" height="80.0" fill="url(#f4)"/>
<rect x="327" y="273.3" width="4.05" height="90.0" fill="url(#f5)"/>
<rect x="331" y="271.3" width="4.05" height="96.0" fill="url(#f6)"/>
<rect x="335" y="269.2" width="4.05" height="104.0" fill="url(#f7)"/>
<rect x="339" y="267.1" width="4.05" height="110.0" fill="url(#f8)"/>
<rect x="343" y="265.0" width="4.05" height="116.0" fill="url(#f9)"/>
<rect x="347" y="262.9" width="4.05" height="122.0" fill="url(#f10)"/>
<rect x="351" y="260.8" width="4.05" height="128.0" fill="url(#f11)"/>
<rect x="355" y="252.7" width="4.05" height="138.0" fill="url(#f12)"/>
<rect x="359" y="242.6" width="4.05" height="152.0" fill="url(#f13)"/>
<rect x="363" y="236.5" width="4.05" height="162.0" fill="url(#f14)"/>
<rect x="367" y="234.4" width="4.05" height="168.0" fill="url(#f15)"/>
<rect x="371" y="230.4" width="4.05" height="174.0" fill="url(#f16)"/>
<rect x="375" y="228.3" width="4.05" height="180.0" fill="url(#f17)"/>
<rect x="379" y="226.2" width="4.05" height="184.0" fill="url(#f18)"/>
<rect x="383" y="226.1" width="4.05" height="188.0" fill="url(#f19)"/>
<rect x="387" y="226.0" width="4.05" height="190.0" fill="url(#f20)"/>
<rect x="391" y="223.9" width="4.05" height="196.0" fill="url(#f21)"/>
<rect x="395" y="223.8" width="4.05" height="198.0" fill="url(#f22)"/>
<rect x="399" y="223.2" width="2.05" height="200.0" fill="url(#f23)"/>
<rect x="401" y="222.2" width="2.05" height="202.0" fill="url(#f24)"/>
<rect x="403" y="221.2" width="2.05" height="206.0" fill="url(#f25)"/>
<rect x="405" y="222.1" width="2.05" height="206.0" fill="url(#f26)"/>
<rect x="407" y="221.1" width="2.05" height="208.0" fill="url(#f27)"/>
<rect x="409" y="220.0" width="2.05" height="210.0" fill="url(#f28)"/>
<rect x="411" y="219.0" width="2.05" height="212.0" fill="url(#f29)"/>
<rect x="413" y="219.9" width="2.05" height="212.0" fill="url(#f30)"/>
<rect x="415" y="218.9" width="2.05" height="216.0" fill="url(#f31)"/>
<rect x="417" y="217.8" width="2.05" height="218.0" fill="url(#f32)"/>
<rect x="419" y="218.8" width="2.05" height="218.0" fill="url(#f33)"/>
<rect x="421" y="217.8" width="2.05" height="220.0" fill="url(#f34)"/>
<rect x="423" y="218.7" width="2.05" height="220.0" fill="url(#f35)"/>
<rect x="425" y="217.7" width="2.05" height="222.0" fill="url(#f36)"/>
<rect x="427" y="218.6" width="2.05" height="222.0" fill="url(#f37)"/>
<rect x="429" y="217.6" width="2.05" height="224.0" fill="url(#f38)"/>
<rect x="431" y="218.5" width="2.05" height="224.0" fill="url(#f39)"/>
<rect x="433" y="217.5" width="2.05" height="226.0" fill="url(#f40)"/>
<rect x="435" y="220.4" width="2.05" height="224.0" fill="url(#f41)"/>
<rect x="437" y="225.4" width="2.05" height="220.0" fill="url(#f42)"/>
<rect x="439" y="230.3" width="2.05" height="218.0" fill="url(#f43)"/>
<rect x="441" y="239.3" width="2.05" height="210.0" fill="url(#f44)"/>
<rect x="443" y="246.0" width="1.05" height="204.0" fill="url(#f45)"/>
<rect x="444" y="250.5" width="1.05" height="200.0" fill="url(#f46)"/>
<rect x="445" y="255.0" width="1.05" height="196.0" fill="url(#f47)"/>
<rect x="446" y="259.5" width="1.05" height="192.0" fill="url(#f48)"/>
<rect x="447" y="263.9" width="1.05" height="188.0" fill="url(#f49)"/>
<rect x="448" y="266.4" width="1.05" height="186.0" fill="url(#f50)"/>
<rect x="449" y="270.9" width="1.05" height="182.0" fill="url(#f51)"/>
<rect x="450" y="271.4" width="1.05" height="182.0" fill="url(#f52)"/>
<rect x="451" y="273.8" width="1.05" height="180.0" fill="url(#f53)"/>
<rect x="452" y="274.3" width="1.05" height="180.0" fill="url(#f54)"/>
<rect x="453" y="274.8" width="1.05" height="180.0" fill="url(#f55)"/>
<rect x="454" y="275.3" width="1.05" height="180.0" fill="url(#f56)"/>
<rect x="455" y="275.7" width="1.05" height="180.0" fill="url(#f57)"/>
<rect x="456" y="264.2" width="1.05" height="174.0" fill="url(#f58)"/>
<rect x="457" y="264.7" width="1.05" height="174.0" fill="url(#f59)"/>
<rect x="458" y="265.2" width="1.05" height="174.0" fill="url(#f60)"/>
<rect x="459" y="265.7" width="1.05" height="174.0" fill="url(#f61)"/>
<rect x="460" y="266.1" width="1.05" height="174.0" fill="url(#f62)"/>
<rect x="461" y="266.6" width="1.05" height="174.0" fill="url(#f63)"/>
<rect x="462" y="267.1" width="1.05" height="174.0" fill="url(#f64)"/>
<rect x="463" y="265.6" width="1.05" height="176.0" fill="url(#f65)"/>
<rect x="464" y="266.0" width="1.05" height="176.0" fill="url(#f66)"/>
<rect x="465" y="264.5" width="1.05" height="178.0" fill="url(#f67)"/>
<rect x="466" y="265.0" width="1.05" height="178.0" fill="url(#f68)"/>
<rect x="467" y="263.5" width="1.05" height="180.0" fill="url(#f69)"/>
<rect x="468" y="262.2" width="2.05" height="182.0" fill="url(#f70)"/>
<rect x="470" y="261.1" width="2.05" height="186.0" fill="url(#f71)"/>
<rect x="472" y="258.1" width="2.05" height="190.0" fill="url(#f72)"/>
<rect x="474" y="257.1" width="2.05" height="192.0" fill="url(#f73)"/>
<rect x="476" y="256.0" width="2.05" height="192.0" fill="url(#f74)"/>
<rect x="478" y="255.0" width="2.05" height="196.0" fill="url(#f75)"/>
<rect x="480" y="253.9" width="2.05" height="196.0" fill="url(#f76)"/>
<rect x="482" y="252.9" width="2.05" height="198.0" fill="url(#f77)"/>
<rect x="484" y="251.8" width="2.05" height="200.0" fill="url(#f78)"/>
<rect x="486" y="252.8" width="2.05" height="200.0" fill="url(#f79)"/>
<rect x="488" y="251.7" width="2.05" height="202.0" fill="url(#f80)"/>
<rect x="490" y="252.7" width="2.05" height="202.0" fill="url(#f81)"/>
<rect x="492" y="253.7" width="2.05" height="202.0" fill="url(#f82)"/>
<rect x="494" y="254.6" width="2.05" height="202.0" fill="url(#f83)"/>
<rect x="496" y="255.6" width="2.05" height="202.0" fill="url(#f84)"/>
<rect x="498" y="256.5" width="2.05" height="202.0" fill="url(#f85)"/>
<rect x="500" y="257.5" width="2.05" height="202.0" fill="url(#f86)"/>
<rect x="502" y="258.4" width="2.05" height="202.0" fill="url(#f87)"/>
<rect x="504" y="259.4" width="2.05" height="202.0" fill="url(#f88)"/>
<rect x="506" y="260.3" width="2.05" height="202.0" fill="url(#f89)"/>
<rect x="508" y="261.3" width="2.05" height="202.0" fill="url(#f90)"/>
<rect x="510" y="262.2" width="2.05" height="202.0" fill="url(#f91)"/>
<rect x="512" y="263.2" width="2.05" height="202.0" fill="url(#f92)"/>
<rect x="514" y="266.2" width="2.05" height="200.0" fill="url(#f93)"/>
<rect x="516" y="267.1" width="2.05" height="200.0" fill="url(#f94)"/>
<rect x="518" y="268.1" width="2.05" height="200.0" fill="url(#f95)"/>
<rect x="520" y="269.0" width="2.05" height="200.0" fill="url(#f96)"/>
<rect x="522" y="270.0" width="2.05" height="200.0" fill="url(#f97)"/>
<rect x="524" y="270.9" width="2.05" height="200.0" fill="url(#f98)"/>
<rect x="526" y="273.9" width="2.05" height="198.0" fill="url(#f99)"/>
<rect x="528" y="272.8" width="2.05" height="200.0" fill="url(#f100)"/>
<rect x="530" y="273.6" width="1.05" height="200.0" fill="url(#f101)"/></g>
</g>
<g shape-rendering="crispEdges">
<polygon points="417.8,405 421,401 449.3,387.5 463.2,395 463.2,480 441,492.5 434,495 424,494 418.5,489" fill="#00e800"/>
<polygon points="417.8,405 441,408 441,492.5 434,495 424,494 418.5,489" fill="#00e400"/>
<polygon points="441,408 463.2,396 463.2,480 441,492.5" fill="#00cc00"/>
<path d="M420.5 401.5 L449.3 387.8 L463 395 L437 408.6 Q428 410.5 422 407.5 Q418.5 404.5 420.5 401.5Z" fill="#00c000"/>
<path d="M421 403 L449 389.5 L462 396" fill="none" stroke="#00e400" stroke-width="1"/>
<path d="M419 405 Q420 409 428 410 L437 409.3 L463 396" fill="none" stroke="#00f400" stroke-width="1.5"/>
<rect x="417.8" y="405" width="2" height="84" fill="#00ff00"/>
<rect x="424" y="409" width="1.2" height="85" fill="#00ff00"/>
<rect x="436" y="409" width="1.4" height="85" fill="#00ff00"/>
<rect x="420" y="409" width="4" height="83" fill="#00d800"/>
<rect x="462" y="396" width="1.4" height="84" fill="#00f000"/>
<path d="M418.5 489 L424 494 L434 495 L441 492.5 L463.2 480" fill="none" stroke="#00ff00" stroke-width="1.5"/>
</g>
<g shape-rendering="crispEdges">
<g clip-path="url(#cpGrid)">
<path d="M0 -418.9 L867 -1.9 M0 -384.9 L867 32.1 M0 -350.9 L867 66.2 M0 -316.8 L867 100.2 M0 -282.8 L867 134.2 M0 -248.8 L867 168.3 M0 -214.7 L867 202.3 M0 -146.7 L867 270.4 M0 -112.6 L867 304.4 M0 -78.6 L867 338.4 M0 -44.6 L867 372.4 M0 -10.6 L867 406.5 M0 23.5 L867 440.5 M0 57.5 L867 474.5 M0 91.5 L867 508.6 M0 125.6 L867 542.6 M0 193.6 L867 610.7 M0 227.7 L867 644.7 M0 261.7 L867 678.7 M0 295.7 L867 712.7 M0 329.8 L867 746.8 M0 363.8 L867 780.8 M0 397.8 L867 814.8 M0 431.8 L867 848.9 M0 465.9 L867 882.9 M0 533.9 L867 951 M0 568 L867 985 M0 602 L867 1019 M0 636 L867 1053 M0 670.1 L867 1087.1 M0 704.1 L867 1121.1 M0 738.1 L867 1155.1 M0 772.1 L867 1189.2 M0 806.2 L867 1223.2 M0 9.6 L867 -468.3 M0 46.1 L867 -431.8 M0 82.6 L867 -395.3 M0 119.2 L867 -358.8 M0 155.7 L867 -322.3 M0 192.2 L867 -285.8 M0 228.7 L867 -249.3 M0 301.7 L867 -176.3 M0 338.2 L867 -139.8 M0 374.7 L867 -103.2 M0 411.2 L867 -66.7 M0 447.8 L867 -30.2 M0 484.3 L867 6.3 M0 520.8 L867 42.8 M0 557.3 L867 79.3 M0 593.8 L867 115.8 M0 666.8 L867 188.8 M0 703.3 L867 225.3 M0 739.8 L867 261.9 M0 776.3 L867 298.4 M0 812.8 L867 334.9 M0 849.4 L867 371.4 M0 885.9 L867 407.9 M0 922.4 L867 444.4 M0 958.9 L867 480.9 M0 1031.9 L867 553.9 M0 1068.4 L867 590.4 M0 1104.9 L867 627 M0 1141.4 L867 663.5 M0 1177.9 L867 700 M0 1214.5 L867 736.5 M0 1251 L867 773 M0 1287.5 L867 809.5" stroke="#d0d0ce" stroke-width="1" fill="none"/>
<path d="M0 -180.7 L867 236.3 M0 159.6 L867 576.6 M0 499.9 L867 916.9 M0 265.2 L867 -212.8 M0 630.3 L867 152.3 M0 995.4 L867 517.4" stroke="#dedbd2" stroke-width="2" fill="none"/>
</g>
<line x1="211" y1="261.3" x2="449.3" y2="375.9" stroke="#00ff00" stroke-width="1" stroke-dasharray="4 1.5"/>
<line x1="460.3" y1="381.2" x2="531" y2="415.2" stroke="#d0d0ce" stroke-width="1"/>
<polygon points="215,86.2 526,235.9 526,695.9 215,546.2" fill="none" class="put"/>
<g fill="none">
<line x1="215" y1="86.2" x2="31" y2="188" class="bl"/>
<line x1="526" y1="235.9" x2="342" y2="337.7" class="bl"/>
<line x1="31" y1="188" x2="342" y2="337.7" class="bl"/>
<line x1="215" y1="546.2" x2="31" y2="648" class="bl"/>
<line x1="526" y1="695.9" x2="342" y2="797.7" class="bl"/>
<line x1="31" y1="648" x2="342" y2="797.7" class="bl"/>
<line x1="31" y1="188" x2="31" y2="648" class="bl"/>
<line x1="342" y1="337.7" x2="342" y2="797.7" class="bl"/>
<line x1="258.1" y1="159.2" x2="116.1" y2="237.8" class="cy"/>
<line x1="481.5" y1="266.8" x2="339.4" y2="345.4" class="cy"/>
<line x1="116.1" y1="237.8" x2="339.4" y2="345.4" class="cy"/>
<line x1="258.1" y1="515.3" x2="116.1" y2="593.9" class="cy"/>
<line x1="481.5" y1="622.8" x2="339.4" y2="701.4" class="cy"/>
<line x1="116.1" y1="593.9" x2="339.4" y2="701.4" class="cy"/>
<line x1="116.1" y1="237.8" x2="116.1" y2="593.9" class="cy"/>
<line x1="339.4" y1="345.4" x2="339.4" y2="701.4" class="cy"/>
<line x1="349.2" y1="150.8" x2="165.2" y2="252.6" class="pu"/>
<line x1="165.2" y1="252.6" x2="165.2" y2="712.6" class="pu"/>
<line x1="349.2" y1="610.8" x2="165.2" y2="712.6" class="pu"/>
<line x1="456.3" y1="202.4" x2="272.3" y2="304.2" class="pu"/>
<line x1="272.3" y1="304.2" x2="272.3" y2="764.2" class="pu"/>
<line x1="456.3" y1="662.4" x2="272.3" y2="764.2" class="pu"/>
<line x1="215" y1="263.3" x2="31" y2="365.1" class="pu"/>
<line x1="31" y1="365.1" x2="342" y2="514.8" class="pu"/>
<line x1="526" y1="413" x2="342" y2="514.8" class="put2"/>
<line x1="211" y1="404.4" x2="165.2" y2="429.7" class="put"/>
<line x1="293.2" y1="358.9" x2="211" y2="404.4" class="put3"/>
<line x1="349.2" y1="150.8" x2="349.2" y2="610.8" class="put"/>
</g>
</g>
<g shape-rendering="crispEdges">
<polygon points="455.6,361.5 445.8,376 451.6,377 451.6,393.5 460.2,393.5 460.2,378 464.6,377.5" fill="#c80c0c"/>
<rect x="451.6" y="390" width="6" height="3.5" fill="#f00000"/>
</g>
<g fill="none" stroke="#ffb060" stroke-width="2.8" stroke-linecap="round" stroke-linejoin="round">
<path d="M314.7 215.8 C312.3 218.4 305 225.7 300.1 231.6 C295.2 237.5 290.1 244.1 285.5 251 C280.9 257.9 276.4 265.1 272.2 272.8 C267.9 280.5 263.6 288.9 260 297 C256.4 305.1 252.9 313.3 250.3 321.4 C247.7 329.5 245.6 338.3 244.3 345.6 C243 352.9 242.5 358.5 242.3 365 C242.1 371.5 242.8 379.8 243.2 384.5 C243.6 389.2 243.8 389.6 244.6 393 C245.4 396.4 246.5 399.8 247.8 404.6 C249.1 409.4 250.6 416.2 252.6 421.6 C254.6 427.1 257.5 432.9 259.9 437.3 C262.3 441.8 265 444.5 267.2 448.3 C269.4 452.1 272.1 455.1 273.3 460.4 C274.5 465.6 273.7 473.3 274.5 479.8 C275.3 486.3 276.7 492.7 278.1 499.2 C279.5 505.7 282 514.1 283 518.6 C284 523.1 284 524.8 284.2 526"/>
<path d="M284.2 526 C285.2 526.5 288.2 527.2 290.2 528.8 C292.2 530.4 294.7 533.1 296.3 535.6 C297.9 538.1 298.4 542 300 544 C301.6 546 305.2 546 306 547.8 C306.8 549.6 304.2 552.8 304.8 555 C305.4 557.2 307.5 560 309.7 561 C311.9 562 316.4 559.6 318.2 561 C320 562.4 319 566.8 320.6 569.6 C322.2 572.4 325.3 576 327.9 578 C330.5 580 333.8 581.7 336.4 581.7 C339 581.7 340.8 580.4 343.6 578 C346.4 575.6 349.7 572.2 353.3 567.2 C356.9 562.2 361.9 553.3 365.5 547.8 C369.1 542.3 372 537.3 375.2 534.4 C378.4 531.5 381.7 530.3 384.9 530.3 C388.1 530.3 393 533.7 394.6 534.4"/>
<path d="M306 547.5 L307.2 540.5 L312 535.6 L321.8 546.5 L311 544" stroke-width="2.4"/>
<path d="M233.2 438.5 C233.8 438.1 235.8 435.4 236.8 436 C237.8 436.6 236.9 440.9 239.3 442 C241.7 443.1 247.4 442.7 251.4 442.5 C255.4 442.3 261.5 441.2 263.5 441" stroke-width="2.4"/>
<path d="M233.2 438.5 C234.6 440.3 238.7 447.2 241.7 449.5 C244.7 451.8 248.2 452.4 251.4 452 C254.6 451.6 259 448.8 261 447 C263 445.2 263.1 442 263.5 441" stroke-width="2.4"/>
<path d="M306 448.3 C307 449.5 309.4 454.4 312 455.5 C314.6 456.6 318.6 454.9 321.8 454.6 C325.1 454.3 328.5 454.2 331.5 453.6 C334.5 453 338.6 451.2 340 450.7" stroke-width="2.4"/>
<path d="M310 454 C310.7 454.8 312 457.3 314 459 C316 460.7 318.9 463.6 321.8 464 C324.7 464.4 328.5 463.8 331.5 461.6 C334.5 459.4 338.6 452.5 340 450.7" stroke-width="2.4"/>
</g>
<g shape-rendering="crispEdges">
<rect x="701.5" y="156.5" width="140" height="340" fill="#f5f5f5" stroke="#000" stroke-width="1"/>
<line x1="701" y1="181.5" x2="842" y2="181.5" stroke="#000" stroke-width="1"/>
<line x1="701" y1="207.5" x2="842" y2="207.5" stroke="#000" stroke-width="1"/>
<line x1="701" y1="403.5" x2="842" y2="403.5" stroke="#000" stroke-width="1"/>
<rect x="716" y="218" width="21" height="170" fill="url(#cbar)"/>
</g>
<text class="lg" x="716" y="173">HMagTotal</text>
<text class="lg" x="716" y="198.5">Type: dB</text>
<text class="lg" x="760.4" y="224.8">2</text>
<text class="lg" x="752.3" y="241.8">-3</text>
<text class="lg" x="752.3" y="258.8">-8</text>
<text class="lg" x="747.9" y="275.8">-13</text>
<text class="lg" x="747.9" y="292.8">-18</text>
<text class="lg" x="747.9" y="309.8">-23</text>
<text class="lg" x="747.9" y="326.8">-29</text>
<text class="lg" x="747.9" y="343.8">-34</text>
<text class="lg" x="747.9" y="360.8">-39</text>
<text class="lg" x="747.9" y="377.8">-44</text>
<text class="lg" x="747.9" y="394.8">-50</text>
<text class="lg" x="716" y="420">Max: 2.14</text>
<text class="lg" x="716" y="436.8">Min: -50</text>
<text class="lg" x="716" y="453.6">Units: dBA/m</text>
<text class="lg" x="716" y="470.4">Mean: -38.6</text>
<text class="lg" x="716" y="487.2">STD: -25.2</text>
</svg>
</body></html>
